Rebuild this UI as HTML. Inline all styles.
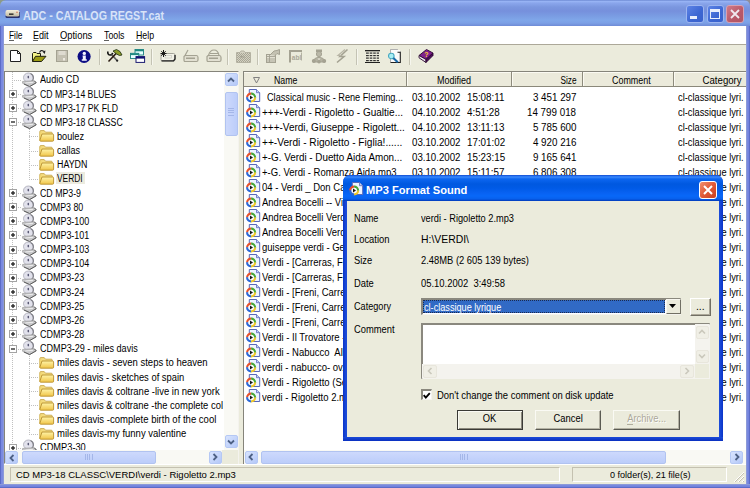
<!DOCTYPE html><html><head><meta charset="utf-8"><style>
*{margin:0;padding:0;box-sizing:border-box}
html,body{width:750px;height:488px;overflow:hidden;background:#fff}
body{position:relative;font-family:"Liberation Sans",sans-serif;font-size:9px;color:#000}
.ab{position:absolute}
.t{position:absolute;white-space:pre;line-height:1}
svg{position:absolute;overflow:visible}
</style></head><body><div class="ab" style="left:0px;top:0px;width:750px;height:488px;background:#7c92dc"></div>
<div class="ab" style="left:0px;top:0px;width:8px;height:8px;background:#8c9a88"></div>
<div class="ab" style="left:742px;top:0px;width:8px;height:8px;background:#8e8e98"></div>
<div class="ab" style="left:0px;top:0px;width:750px;height:27px;border-radius:6px 6px 0 0;background:linear-gradient(#6d8ad3 0px,#97b3f4 1.5px,#8aa6ec 3px,#7b97df 7px,#7690dc 11px,#7a9ce3 16px,#7fa6e9 20px,#7ca0e6 23px,#6f8bd6 26px)"></div>
<div class="ab" style="left:0px;top:26px;width:4px;height:462px;background:linear-gradient(90deg,#5c6cc8 0,#5c6cc8 1px,#7888e0 1px,#7c8ce0 3px,#8c9ad8 3px)"></div>
<div class="ab" style="left:746px;top:26px;width:4px;height:462px;background:linear-gradient(90deg,#8c9ad8 0,#8c9ad8 1px,#7c8ce0 1px,#7080dc 3px,#5c6cc8 3px)"></div>
<div class="ab" style="left:0px;top:484px;width:750px;height:4px;background:linear-gradient(#8c9ad8 0,#8c9ad8 1px,#7c8ce0 1px,#7080dc 3px,#5c6cc8 3px)"></div>
<div class="ab" style="left:4px;top:26px;width:742px;height:458px;background:#ebebdc"></div>
<div class="ab" style="left:4px;top:26px;width:742px;height:18px;background:#fff"></div>
<div class="ab" style="left:4px;top:44px;width:742px;height:1px;background:#aca899"></div>
<svg style="left:5px;top:9px;" width="16" height="10" viewBox="0 0 16 10"><defs><linearGradient id="ti" x1="0" y1="0" x2="0" y2="1"><stop offset="0" stop-color="#f4f0dc"/><stop offset="1" stop-color="#c0b8a0"/></linearGradient></defs><rect x="0.5" y="6" width="14.5" height="3" rx="1.5" fill="#28306a"/><rect x="0.5" y="1" width="14" height="6.5" rx="2" fill="url(#ti)"/><path d="M14.5 3V7" stroke="#404870" stroke-width="0.8"/><rect x="4" y="4.5" width="4.5" height="1.3" fill="#181818"/><circle cx="12" cy="3.2" r="0.7" fill="#d06040"/></svg>
<div class="t" style="left:23px;transform-origin:0 0;top:10px;font-size:12px;font-weight:bold;transform:scaleX(0.8911);color:#d8e3f8">ADC - CATALOG REGST.cat</div>
<div class="ab" style="left:686px;top:5px;width:18px;height:18px;border-radius:3px;border:1px solid #9db5f0;background:linear-gradient(135deg,#5d84e6,#3c66d2 60%,#3a62cc)"></div>
<div class="ab" style="left:707px;top:5px;width:17px;height:18px;border-radius:3px;border:1px solid #9db5f0;background:linear-gradient(135deg,#5d84e6,#3c66d2 60%,#3a62cc)"></div>
<div class="ab" style="left:726px;top:5px;width:18px;height:18px;border-radius:3px;border:1px solid #d8a0b0;background:linear-gradient(135deg,#d07a88,#b85868 60%,#b05565)"></div>
<div class="ab" style="left:690px;top:16px;width:7px;height:3px;background:#e8eefc"></div>
<div class="ab" style="left:710px;top:9px;width:10px;height:10px;border:1.5px solid #e8eefc;border-top-width:3px"></div>
<svg style="left:730px;top:9px;" width="10" height="10" viewBox="0 0 10 10"><path d="M1 1L9 9M9 1L1 9" stroke="#f0e8ee" stroke-width="1.8"/></svg>
<div class="t" style="left:8.5px;transform-origin:0 0;top:31px;font-size:10.4px;transform:scaleX(0.8056);">File</div>
<div class="t" style="left:33px;transform-origin:0 0;top:31px;font-size:10.4px;transform:scaleX(0.8705);">Edit</div>
<div class="t" style="left:59.7px;transform-origin:0 0;top:31px;font-size:10.4px;transform:scaleX(0.9012);">Options</div>
<div class="t" style="left:103.5px;transform-origin:0 0;top:31px;font-size:10.4px;transform:scaleX(0.8443);">Tools</div>
<div class="t" style="left:135.5px;transform-origin:0 0;top:31px;font-size:10.4px;transform:scaleX(0.8462);">Help</div>
<div class="ab" style="left:8.5px;top:40px;width:5px;height:1px;background:#606060"></div>
<div class="ab" style="left:33px;top:40px;width:5px;height:1px;background:#606060"></div>
<div class="ab" style="left:59.7px;top:40px;width:7px;height:1px;background:#606060"></div>
<div class="ab" style="left:103.5px;top:40px;width:5px;height:1px;background:#606060"></div>
<div class="ab" style="left:135.5px;top:40px;width:6px;height:1px;background:#606060"></div>
<div class="ab" style="left:99px;top:49px;width:1px;height:16px;background:#c4c3b4"></div>
<div class="ab" style="left:100px;top:49px;width:1px;height:16px;background:#f6f6ee"></div>
<div class="ab" style="left:151px;top:49px;width:1px;height:16px;background:#c4c3b4"></div>
<div class="ab" style="left:152px;top:49px;width:1px;height:16px;background:#f6f6ee"></div>
<div class="ab" style="left:227px;top:49px;width:1px;height:16px;background:#c4c3b4"></div>
<div class="ab" style="left:228px;top:49px;width:1px;height:16px;background:#f6f6ee"></div>
<div class="ab" style="left:257px;top:49px;width:1px;height:16px;background:#c4c3b4"></div>
<div class="ab" style="left:258px;top:49px;width:1px;height:16px;background:#f6f6ee"></div>
<div class="ab" style="left:356px;top:49px;width:1px;height:16px;background:#c4c3b4"></div>
<div class="ab" style="left:357px;top:49px;width:1px;height:16px;background:#f6f6ee"></div>
<div class="ab" style="left:409px;top:49px;width:1px;height:16px;background:#c4c3b4"></div>
<div class="ab" style="left:410px;top:49px;width:1px;height:16px;background:#f6f6ee"></div>
<svg style="left:10px;top:50px;" width="12" height="13" viewBox="0 0 12 13"><path d="M0.5 0.5H7.5L10.5 3.5V11.5H0.5Z" fill="#fff" stroke="#202020"/><path d="M7.5 0.5V3.5H10.5" fill="none" stroke="#202020"/></svg>
<svg style="left:32px;top:49px;" width="15" height="14" viewBox="0 0 15 14"><path d="M0.5 12.5V4.5L1.5 3.5H4L5 4.5H8.5V7" fill="#f4f488" stroke="#202010" stroke-width="1"/><path d="M0.5 12.5L3.5 7.3H14L9.5 12.5Z" fill="#9c9c14" stroke="#202010" stroke-width="1"/><path d="M7.5 3.5Q9 0.5 11.5 2" fill="none" stroke="#202020" stroke-width="1.1"/><path d="M10.3 2.6L13.5 1.5L12.8 5Z" fill="#202020"/></svg>
<svg style="left:56px;top:50px;" width="13" height="13" viewBox="0 0 13 13"><rect x="0.5" y="0.5" width="11" height="11" fill="#c4c1b2" stroke="#a4a292"/><rect x="2.5" y="1" width="7" height="4" fill="#dedbd0"/><rect x="7" y="8" width="2" height="2.5" fill="#eeeae0"/></svg>
<svg style="left:77px;top:50px;" width="15" height="14" viewBox="0 0 15 14"><ellipse cx="7.1" cy="6.5" rx="6.6" ry="6.4" fill="#0c0c84"/><circle cx="7.3" cy="3.4" r="1.7" fill="#f4f4ff"/><path d="M5.6 5.4H8.8V9.2H9.8V10.8H4.8V9.2H5.8V6.8H5.6Z" fill="#f4f4ff"/></svg>
<svg style="left:107px;top:49px;" width="16" height="14" viewBox="0 0 16 14"><path d="M0.8 2.5Q0.5 6 3.2 6Q5.2 6 5.6 3.8" fill="none" stroke="#101010" stroke-width="1.6"/><path d="M4.5 5.5L10.5 12" stroke="#606060" stroke-width="1.8"/><path d="M9.5 11L10.8 12.3" stroke="#202020" stroke-width="1.8"/><path d="M1.5 12.5L9.5 4" stroke="#2a1a10" stroke-width="1.6"/><path d="M6 2L9.5 0.5L13 2.5L15 6L12.5 6.5L9.5 5Z" fill="#8a9a28" stroke="#1a2a10" stroke-width="0.8"/></svg>
<svg style="left:130px;top:49px;" width="16" height="14" viewBox="0 0 16 14"><rect x="5" y="0.5" width="8.5" height="5.5" fill="#e8ffff" stroke="#1a8080" stroke-width="0.9"/><rect x="5" y="0.5" width="8.5" height="1.8" fill="#208a80"/><rect x="0.5" y="4.3" width="8.3" height="5.2" fill="#e8ffff" stroke="#1a8080" stroke-width="0.9"/><rect x="0.5" y="4.3" width="8.3" height="1.8" fill="#208a80"/><rect x="6" y="7.6" width="8.6" height="5.8" fill="#fff" stroke="#1a1a70" stroke-width="1"/><rect x="6" y="7.6" width="8.6" height="2" fill="#101070"/></svg>
<svg style="left:160px;top:49px;" width="16" height="14" viewBox="0 0 16 14"><path d="M2.5 4.5H13.5Q15 4.5 15 6V10.5Q15 12 13.5 12H2.5Q1 12 1 10.5V6Q1 4.5 2.5 4.5Z" fill="#f2f2e8" stroke="#909088" stroke-width="0.8"/><path d="M1.5 11.8H13.5L15 10V6" fill="none" stroke="#202020" stroke-width="1.3"/><rect x="5" y="6.5" width="6.5" height="2.5" fill="none" stroke="#c8c8c0" stroke-width="0.7"/><path d="M3.5 1V8M0.5 4.5H6.5M1.3 2.2L5.7 6.8M5.7 2.2L1.3 6.8" stroke="#181818" stroke-width="1"/></svg>
<svg style="left:183px;top:49px;" width="16" height="14" viewBox="0 0 16 14"><path d="M2 6.5H13.5Q15 6.5 15 8.5V11Q15 12.5 13.5 12.5H2Q1 12.5 1 11V7.5Z" fill="#e2e0d2" stroke="#a4a292" stroke-width="1.2"/><path d="M2 6.5L5 1" stroke="#a4a292" stroke-width="1.2"/><rect x="3" y="8.5" width="9" height="1.5" fill="#a4a292"/></svg>
<svg style="left:206px;top:49px;" width="16" height="14" viewBox="0 0 16 14"><path d="M2 6.5H13.5Q15 6.5 15 8.5V11Q15 12.5 13.5 12.5H2Q1 12.5 1 11V7.5Z" fill="#e2e0d2" stroke="#a4a292" stroke-width="1.2"/><path d="M2.5 6.5Q4 1 8 1Q12 1 13 6.5" fill="none" stroke="#a4a292" stroke-width="1.2"/><path d="M4 4.5H12" stroke="#a4a292"/><rect x="3" y="8.5" width="9" height="1.5" fill="#a4a292"/></svg>
<svg style="left:236px;top:50px;" width="15" height="13" viewBox="0 0 15 13"><defs><pattern id="chk" width="2" height="2" patternUnits="userSpaceOnUse"><rect width="1" height="1" fill="#a8a696"/><rect x="1" y="1" width="1" height="1" fill="#a8a696"/></pattern></defs><path d="M0.5 2.5H4L5 1H8L9 2.5H14.5V12.5H0.5Z" fill="#d4d2c2" stroke="#b4b2a2"/><rect x="1" y="3" width="13" height="9" fill="url(#chk)"/><path d="M4 7H9M4 7L6 5.5" stroke="#a4a292" stroke-width="1.2"/></svg>
<svg style="left:266px;top:49px;" width="15" height="14" viewBox="0 0 15 14"><rect x="0.5" y="5.5" width="9" height="8" fill="#e2e0d2" stroke="#a4a292"/><path d="M1 7.5H9M1 10H9M1 12H9M3.5 6V13" stroke="#a4a292" stroke-width="0.9"/><path d="M4 6L8 2L11 1.5L13.5 0.5V5.5L11 4.5L9 6.5" fill="#c4c2b2" stroke="#a4a292"/></svg>
<svg style="left:289px;top:50px;" width="14" height="13" viewBox="0 0 14 13"><path d="M1 12.5V1H13" fill="none" stroke="#a4a292" stroke-width="2"/><path d="M12.5 2.5V10.5" stroke="#b4b2a2" stroke-width="1"/><text x="2.8" y="10" font-family="Liberation Sans" font-weight="bold" font-size="6.5" fill="#aaa898">abl</text></svg>
<svg style="left:311px;top:49px;" width="16" height="15" viewBox="0 0 16 15"><rect x="5" y="0.5" width="6" height="2.5" fill="#a4a292"/><circle cx="8" cy="5" r="2.6" fill="#bab8a8" stroke="#a4a292"/><path d="M2 13Q2.5 8.5 8 8.5Q13.5 8.5 14 13Z" fill="#b4b2a2" stroke="#a4a292"/><circle cx="2.8" cy="12" r="2" fill="#a4a292"/><circle cx="13.2" cy="12" r="2" fill="#a4a292"/><circle cx="8" cy="12.8" r="1.8" fill="#a4a292"/><path d="M7 9L8 11L9 9" stroke="#dcdacc" fill="none"/></svg>
<svg style="left:336px;top:49px;" width="13" height="14" viewBox="0 0 13 14"><path d="M11.5 0.5L4 7.5H8L1 13.5" fill="none" stroke="#a4a292" stroke-width="1.6"/><path d="M9 0.5L2 6.5H5.5" fill="none" stroke="#b8b6a6" stroke-width="1.2"/></svg>
<svg style="left:365px;top:50px;" width="15" height="13" viewBox="0 0 15 13"><rect x="0" y="0" width="15" height="1.3" fill="#202020"/><g fill="#303030"><rect x="1" y="2.5" width="13" height="1.2"/><rect x="1" y="5" width="13" height="1.2"/><rect x="1" y="7.5" width="13" height="1.2"/><rect x="1" y="10" width="13" height="1.2"/></g><g fill="#ebebdc"><rect x="3.8" y="2" width="0.9" height="11"/><rect x="7.3" y="2" width="0.9" height="11"/><rect x="10.8" y="2" width="0.9" height="11"/></g><rect x="0" y="12" width="15" height="1" fill="#202020"/></svg>
<svg style="left:387px;top:49px;" width="15" height="15" viewBox="0 0 15 15"><path d="M3.5 13.5V0.5H10L13.5 3" fill="#fafafa" stroke="#b0b0b0" stroke-width="1"/><path d="M3.5 0.5H10L13.5 3" fill="none" stroke="#b0b0b0"/><rect x="4" y="1" width="9" height="12" fill="#fafafa"/><path d="M10.5 3.3H13.3V13.5H3.5" fill="none" stroke="#202020" stroke-width="1.1"/><circle cx="4.3" cy="7" r="2.8" fill="#a8eef4" stroke="#48a8c0" stroke-width="1.1"/><path d="M6.3 9L10.8 13.2" stroke="#1a6aa8" stroke-width="2.2"/></svg>
<svg style="left:418px;top:49px;" width="16" height="15" viewBox="0 0 16 15"><path d="M1 6.5L8.5 0.5L15 4L8 10.5Z" fill="#80208e" stroke="#2a0830" stroke-width="0.9"/><path d="M1 6.5V8.8L8 13.5V10.5Z" fill="#ece4f0" stroke="#2a0830" stroke-width="0.9"/><path d="M8 10.5L15 4V6.5L8 13.5Z" fill="#4a0a58" stroke="#2a0830" stroke-width="0.9"/><text x="6.2" y="8" font-family="Liberation Sans" font-weight="bold" font-size="7" fill="#f8d020">?</text></svg>
<div class="ab" style="left:4px;top:71px;width:235px;height:393px;background:#fff;border-top:1px solid #85847a;border-left:1px solid #85847a;border-right:1px solid #f4f3ee;border-bottom:1px solid #f4f3ee"></div>
<div class="ab" style="left:5px;top:72px;width:219px;height:378px;overflow:hidden">
<div class="ab" style="left:7px;top:0.00px;width:1px;height:392.00px;background:repeating-linear-gradient(#c0c0c0 0 1px,transparent 1px 2px)"></div>
<div class="ab" style="left:9px;top:8.00px;width:8px;height:1px;background:repeating-linear-gradient(90deg,#c0c0c0 0 1px,transparent 1px 2px)"></div>
<div class="ab" style="left:9px;top:22.00px;width:8px;height:1px;background:repeating-linear-gradient(90deg,#c0c0c0 0 1px,transparent 1px 2px)"></div>
<div class="ab" style="left:9px;top:36.00px;width:8px;height:1px;background:repeating-linear-gradient(90deg,#c0c0c0 0 1px,transparent 1px 2px)"></div>
<div class="ab" style="left:9px;top:50.00px;width:8px;height:1px;background:repeating-linear-gradient(90deg,#c0c0c0 0 1px,transparent 1px 2px)"></div>
<div class="ab" style="left:24px;top:64.00px;width:9px;height:1px;background:repeating-linear-gradient(90deg,#c0c0c0 0 1px,transparent 1px 2px)"></div>
<div class="ab" style="left:24px;top:79.00px;width:9px;height:1px;background:repeating-linear-gradient(90deg,#c0c0c0 0 1px,transparent 1px 2px)"></div>
<div class="ab" style="left:24px;top:93.00px;width:9px;height:1px;background:repeating-linear-gradient(90deg,#c0c0c0 0 1px,transparent 1px 2px)"></div>
<div class="ab" style="left:24px;top:107.00px;width:9px;height:1px;background:repeating-linear-gradient(90deg,#c0c0c0 0 1px,transparent 1px 2px)"></div>
<div class="ab" style="left:9px;top:121.00px;width:8px;height:1px;background:repeating-linear-gradient(90deg,#c0c0c0 0 1px,transparent 1px 2px)"></div>
<div class="ab" style="left:9px;top:135.00px;width:8px;height:1px;background:repeating-linear-gradient(90deg,#c0c0c0 0 1px,transparent 1px 2px)"></div>
<div class="ab" style="left:9px;top:149.00px;width:8px;height:1px;background:repeating-linear-gradient(90deg,#c0c0c0 0 1px,transparent 1px 2px)"></div>
<div class="ab" style="left:9px;top:163.00px;width:8px;height:1px;background:repeating-linear-gradient(90deg,#c0c0c0 0 1px,transparent 1px 2px)"></div>
<div class="ab" style="left:9px;top:178.00px;width:8px;height:1px;background:repeating-linear-gradient(90deg,#c0c0c0 0 1px,transparent 1px 2px)"></div>
<div class="ab" style="left:9px;top:192.00px;width:8px;height:1px;background:repeating-linear-gradient(90deg,#c0c0c0 0 1px,transparent 1px 2px)"></div>
<div class="ab" style="left:9px;top:206.00px;width:8px;height:1px;background:repeating-linear-gradient(90deg,#c0c0c0 0 1px,transparent 1px 2px)"></div>
<div class="ab" style="left:9px;top:220.00px;width:8px;height:1px;background:repeating-linear-gradient(90deg,#c0c0c0 0 1px,transparent 1px 2px)"></div>
<div class="ab" style="left:9px;top:234.00px;width:8px;height:1px;background:repeating-linear-gradient(90deg,#c0c0c0 0 1px,transparent 1px 2px)"></div>
<div class="ab" style="left:9px;top:248.00px;width:8px;height:1px;background:repeating-linear-gradient(90deg,#c0c0c0 0 1px,transparent 1px 2px)"></div>
<div class="ab" style="left:9px;top:262.00px;width:8px;height:1px;background:repeating-linear-gradient(90deg,#c0c0c0 0 1px,transparent 1px 2px)"></div>
<div class="ab" style="left:9px;top:277.00px;width:8px;height:1px;background:repeating-linear-gradient(90deg,#c0c0c0 0 1px,transparent 1px 2px)"></div>
<div class="ab" style="left:24px;top:291.00px;width:9px;height:1px;background:repeating-linear-gradient(90deg,#c0c0c0 0 1px,transparent 1px 2px)"></div>
<div class="ab" style="left:24px;top:305.00px;width:9px;height:1px;background:repeating-linear-gradient(90deg,#c0c0c0 0 1px,transparent 1px 2px)"></div>
<div class="ab" style="left:24px;top:319.00px;width:9px;height:1px;background:repeating-linear-gradient(90deg,#c0c0c0 0 1px,transparent 1px 2px)"></div>
<div class="ab" style="left:24px;top:333.00px;width:9px;height:1px;background:repeating-linear-gradient(90deg,#c0c0c0 0 1px,transparent 1px 2px)"></div>
<div class="ab" style="left:24px;top:347.00px;width:9px;height:1px;background:repeating-linear-gradient(90deg,#c0c0c0 0 1px,transparent 1px 2px)"></div>
<div class="ab" style="left:24px;top:362.00px;width:9px;height:1px;background:repeating-linear-gradient(90deg,#c0c0c0 0 1px,transparent 1px 2px)"></div>
<div class="ab" style="left:9px;top:376.00px;width:8px;height:1px;background:repeating-linear-gradient(90deg,#c0c0c0 0 1px,transparent 1px 2px)"></div>
<div class="ab" style="left:24px;top:57.25px;width:1px;height:49.60px;background:repeating-linear-gradient(#c0c0c0 0 1px,transparent 1px 2px)"></div>
<div class="ab" style="left:24px;top:283.65px;width:1px;height:77.90px;background:repeating-linear-gradient(#c0c0c0 0 1px,transparent 1px 2px)"></div>
<svg style="left:17px;top:0.50px" width="16" height="15" viewBox="0 0 16 15"><ellipse cx="6.4" cy="4.6" rx="4.9" ry="4.6" fill="#e2e2ec" stroke="#a0a0ac" stroke-width="0.7"/><path d="M8.5 0.6Q11.6 2 11.4 5.2Q11.2 7.6 9.5 8.6" fill="none" stroke="#7c7c84" stroke-width="1.1"/><ellipse cx="6.3" cy="4.1" rx="0.8" ry="1.3" fill="#555570"/><path d="M0.6 8.4L12.4 7.8L14.2 9.8L7.6 13.6L0.6 10.3Z" fill="#c8c8ca" stroke="#9a9a9a" stroke-width="0.7"/><path d="M12.4 7.8L14.2 9.8L7.6 13.6L2 11" fill="none" stroke="#5a5a5a" stroke-width="1"/><path d="M3.5 10L11 9.3" stroke="#f8f8f8" stroke-width="0.8"/></svg>
<div class="t" style="left:35px;transform-origin:0 0;top:3px;font-size:10px;transform:scaleX(0.9112);">Audio CD</div>
<svg style="left:17px;top:14.65px" width="16" height="15" viewBox="0 0 16 15"><ellipse cx="6.4" cy="4.6" rx="4.9" ry="4.6" fill="#e2e2ec" stroke="#a0a0ac" stroke-width="0.7"/><path d="M8.5 0.6Q11.6 2 11.4 5.2Q11.2 7.6 9.5 8.6" fill="none" stroke="#7c7c84" stroke-width="1.1"/><ellipse cx="6.3" cy="4.1" rx="0.8" ry="1.3" fill="#555570"/><path d="M0.6 8.4L12.4 7.8L14.2 9.8L7.6 13.6L0.6 10.3Z" fill="#c8c8ca" stroke="#9a9a9a" stroke-width="0.7"/><path d="M12.4 7.8L14.2 9.8L7.6 13.6L2 11" fill="none" stroke="#5a5a5a" stroke-width="1"/><path d="M3.5 10L11 9.3" stroke="#f8f8f8" stroke-width="0.8"/></svg>
<div class="t" style="left:35px;transform-origin:0 0;top:18px;font-size:10px;transform:scaleX(0.8655);">CD MP3-14 BLUES</div>
<svg style="left:4px;top:18.00px" width="8" height="8" viewBox="0 0 8 8"><rect x="0.5" y="0.5" width="7" height="7" fill="#fff" stroke="#a4a4a4"/><path d="M2 4H6" stroke="#202020" stroke-width="1.3"/><path d="M4 2V6" stroke="#202020" stroke-width="1.3"/></svg>
<svg style="left:17px;top:28.80px" width="16" height="15" viewBox="0 0 16 15"><ellipse cx="6.4" cy="4.6" rx="4.9" ry="4.6" fill="#e2e2ec" stroke="#a0a0ac" stroke-width="0.7"/><path d="M8.5 0.6Q11.6 2 11.4 5.2Q11.2 7.6 9.5 8.6" fill="none" stroke="#7c7c84" stroke-width="1.1"/><ellipse cx="6.3" cy="4.1" rx="0.8" ry="1.3" fill="#555570"/><path d="M0.6 8.4L12.4 7.8L14.2 9.8L7.6 13.6L0.6 10.3Z" fill="#c8c8ca" stroke="#9a9a9a" stroke-width="0.7"/><path d="M12.4 7.8L14.2 9.8L7.6 13.6L2 11" fill="none" stroke="#5a5a5a" stroke-width="1"/><path d="M3.5 10L11 9.3" stroke="#f8f8f8" stroke-width="0.8"/></svg>
<div class="t" style="left:35px;transform-origin:0 0;top:32px;font-size:10px;transform:scaleX(0.8664);">CD MP3-17 PK FLD</div>
<svg style="left:4px;top:32.00px" width="8" height="8" viewBox="0 0 8 8"><rect x="0.5" y="0.5" width="7" height="7" fill="#fff" stroke="#a4a4a4"/><path d="M2 4H6" stroke="#202020" stroke-width="1.3"/><path d="M4 2V6" stroke="#202020" stroke-width="1.3"/></svg>
<svg style="left:17px;top:42.95px" width="16" height="15" viewBox="0 0 16 15"><ellipse cx="6.4" cy="4.6" rx="4.9" ry="4.6" fill="#e2e2ec" stroke="#a0a0ac" stroke-width="0.7"/><path d="M8.5 0.6Q11.6 2 11.4 5.2Q11.2 7.6 9.5 8.6" fill="none" stroke="#7c7c84" stroke-width="1.1"/><ellipse cx="6.3" cy="4.1" rx="0.8" ry="1.3" fill="#555570"/><path d="M0.6 8.4L12.4 7.8L14.2 9.8L7.6 13.6L0.6 10.3Z" fill="#c8c8ca" stroke="#9a9a9a" stroke-width="0.7"/><path d="M12.4 7.8L14.2 9.8L7.6 13.6L2 11" fill="none" stroke="#5a5a5a" stroke-width="1"/><path d="M3.5 10L11 9.3" stroke="#f8f8f8" stroke-width="0.8"/></svg>
<div class="t" style="left:35px;transform-origin:0 0;top:46px;font-size:10px;transform:scaleX(0.8702);">CD MP3-18 CLASSC</div>
<svg style="left:4px;top:46.00px" width="8" height="8" viewBox="0 0 8 8"><rect x="0.5" y="0.5" width="7" height="7" fill="#fff" stroke="#a4a4a4"/><path d="M2 4H6" stroke="#202020" stroke-width="1.3"/></svg>
<svg style="left:33.5px;top:58.40px" width="16" height="12" viewBox="0 0 16 12"><defs><linearGradient id="fg" x1="0" y1="0" x2="0" y2="1"><stop offset="0" stop-color="#fff4a8"/><stop offset="1" stop-color="#f0c448"/></linearGradient></defs><path d="M0.8 10.5V1.6Q0.8 0.6 1.8 0.6H5.2L6.5 2.2H12.2Q13.3 2.2 13.3 3.3V4" fill="#f4dc80" stroke="#c8a850" stroke-width="0.9"/><path d="M0.8 10.5V2.5H3L3 10.5Z" fill="#f2d670"/><path d="M3 4H13.6Q14.6 4 14.6 5V10.2Q14.6 11.2 13.6 11.2H1.8Q0.8 11.2 0.8 10.4L3 4Z" fill="url(#fg)" stroke="#b89030" stroke-width="0.9"/></svg>
<div class="t" style="left:52px;transform-origin:0 0;top:60px;font-size:10px;transform:scaleX(0.9162);">boulez</div>
<svg style="left:33.5px;top:72.55px" width="16" height="12" viewBox="0 0 16 12"><defs><linearGradient id="fg" x1="0" y1="0" x2="0" y2="1"><stop offset="0" stop-color="#fff4a8"/><stop offset="1" stop-color="#f0c448"/></linearGradient></defs><path d="M0.8 10.5V1.6Q0.8 0.6 1.8 0.6H5.2L6.5 2.2H12.2Q13.3 2.2 13.3 3.3V4" fill="#f4dc80" stroke="#c8a850" stroke-width="0.9"/><path d="M0.8 10.5V2.5H3L3 10.5Z" fill="#f2d670"/><path d="M3 4H13.6Q14.6 4 14.6 5V10.2Q14.6 11.2 13.6 11.2H1.8Q0.8 11.2 0.8 10.4L3 4Z" fill="url(#fg)" stroke="#b89030" stroke-width="0.9"/></svg>
<div class="t" style="left:52px;transform-origin:0 0;top:74px;font-size:10px;transform:scaleX(0.8996);">callas</div>
<svg style="left:33.5px;top:86.70px" width="16" height="12" viewBox="0 0 16 12"><defs><linearGradient id="fg" x1="0" y1="0" x2="0" y2="1"><stop offset="0" stop-color="#fff4a8"/><stop offset="1" stop-color="#f0c448"/></linearGradient></defs><path d="M0.8 10.5V1.6Q0.8 0.6 1.8 0.6H5.2L6.5 2.2H12.2Q13.3 2.2 13.3 3.3V4" fill="#f4dc80" stroke="#c8a850" stroke-width="0.9"/><path d="M0.8 10.5V2.5H3L3 10.5Z" fill="#f2d670"/><path d="M3 4H13.6Q14.6 4 14.6 5V10.2Q14.6 11.2 13.6 11.2H1.8Q0.8 11.2 0.8 10.4L3 4Z" fill="url(#fg)" stroke="#b89030" stroke-width="0.9"/></svg>
<div class="t" style="left:52px;transform-origin:0 0;top:88px;font-size:10px;transform:scaleX(0.8843);">HAYDN</div>
<div class="ab" style="left:51px;top:99.55px;width:29px;height:12.5px;background:#ecebdf"></div>
<svg style="left:33.5px;top:100.85px" width="16" height="12" viewBox="0 0 16 12"><defs><linearGradient id="fg" x1="0" y1="0" x2="0" y2="1"><stop offset="0" stop-color="#fff4a8"/><stop offset="1" stop-color="#f0c448"/></linearGradient></defs><path d="M0.8 10.5V1.6Q0.8 0.6 1.8 0.6H5.2L6.5 2.2H12.2Q13.3 2.2 13.3 3.3V4" fill="#f4dc80" stroke="#c8a850" stroke-width="0.9"/><path d="M0.8 10.5V2.5H3L3 10.5Z" fill="#f2d670"/><path d="M3 4H13.6Q14.6 4 14.6 5V10.2Q14.6 11.2 13.6 11.2H1.8Q0.8 11.2 0.8 10.4L3 4Z" fill="url(#fg)" stroke="#b89030" stroke-width="0.9"/></svg>
<div class="t" style="left:52px;transform-origin:0 0;top:102px;font-size:10px;transform:scaleX(0.8409);">VERDI</div>
<svg style="left:17px;top:113.70px" width="16" height="15" viewBox="0 0 16 15"><ellipse cx="6.4" cy="4.6" rx="4.9" ry="4.6" fill="#e2e2ec" stroke="#a0a0ac" stroke-width="0.7"/><path d="M8.5 0.6Q11.6 2 11.4 5.2Q11.2 7.6 9.5 8.6" fill="none" stroke="#7c7c84" stroke-width="1.1"/><ellipse cx="6.3" cy="4.1" rx="0.8" ry="1.3" fill="#555570"/><path d="M0.6 8.4L12.4 7.8L14.2 9.8L7.6 13.6L0.6 10.3Z" fill="#c8c8ca" stroke="#9a9a9a" stroke-width="0.7"/><path d="M12.4 7.8L14.2 9.8L7.6 13.6L2 11" fill="none" stroke="#5a5a5a" stroke-width="1"/><path d="M3.5 10L11 9.3" stroke="#f8f8f8" stroke-width="0.8"/></svg>
<div class="t" style="left:35px;transform-origin:0 0;top:117px;font-size:10px;transform:scaleX(0.8784);">CD MP3-9</div>
<svg style="left:4px;top:117.00px" width="8" height="8" viewBox="0 0 8 8"><rect x="0.5" y="0.5" width="7" height="7" fill="#fff" stroke="#a4a4a4"/><path d="M2 4H6" stroke="#202020" stroke-width="1.3"/><path d="M4 2V6" stroke="#202020" stroke-width="1.3"/></svg>
<svg style="left:17px;top:127.85px" width="16" height="15" viewBox="0 0 16 15"><ellipse cx="6.4" cy="4.6" rx="4.9" ry="4.6" fill="#e2e2ec" stroke="#a0a0ac" stroke-width="0.7"/><path d="M8.5 0.6Q11.6 2 11.4 5.2Q11.2 7.6 9.5 8.6" fill="none" stroke="#7c7c84" stroke-width="1.1"/><ellipse cx="6.3" cy="4.1" rx="0.8" ry="1.3" fill="#555570"/><path d="M0.6 8.4L12.4 7.8L14.2 9.8L7.6 13.6L0.6 10.3Z" fill="#c8c8ca" stroke="#9a9a9a" stroke-width="0.7"/><path d="M12.4 7.8L14.2 9.8L7.6 13.6L2 11" fill="none" stroke="#5a5a5a" stroke-width="1"/><path d="M3.5 10L11 9.3" stroke="#f8f8f8" stroke-width="0.8"/></svg>
<div class="t" style="left:35px;transform-origin:0 0;top:131px;font-size:10px;transform:scaleX(0.8853);">CDMP3 80</div>
<svg style="left:4px;top:131.00px" width="8" height="8" viewBox="0 0 8 8"><rect x="0.5" y="0.5" width="7" height="7" fill="#fff" stroke="#a4a4a4"/><path d="M2 4H6" stroke="#202020" stroke-width="1.3"/><path d="M4 2V6" stroke="#202020" stroke-width="1.3"/></svg>
<svg style="left:17px;top:142.00px" width="16" height="15" viewBox="0 0 16 15"><ellipse cx="6.4" cy="4.6" rx="4.9" ry="4.6" fill="#e2e2ec" stroke="#a0a0ac" stroke-width="0.7"/><path d="M8.5 0.6Q11.6 2 11.4 5.2Q11.2 7.6 9.5 8.6" fill="none" stroke="#7c7c84" stroke-width="1.1"/><ellipse cx="6.3" cy="4.1" rx="0.8" ry="1.3" fill="#555570"/><path d="M0.6 8.4L12.4 7.8L14.2 9.8L7.6 13.6L0.6 10.3Z" fill="#c8c8ca" stroke="#9a9a9a" stroke-width="0.7"/><path d="M12.4 7.8L14.2 9.8L7.6 13.6L2 11" fill="none" stroke="#5a5a5a" stroke-width="1"/><path d="M3.5 10L11 9.3" stroke="#f8f8f8" stroke-width="0.8"/></svg>
<div class="t" style="left:35px;transform-origin:0 0;top:145px;font-size:10px;transform:scaleX(0.8960);">CDMP3-100</div>
<svg style="left:4px;top:145.00px" width="8" height="8" viewBox="0 0 8 8"><rect x="0.5" y="0.5" width="7" height="7" fill="#fff" stroke="#a4a4a4"/><path d="M2 4H6" stroke="#202020" stroke-width="1.3"/><path d="M4 2V6" stroke="#202020" stroke-width="1.3"/></svg>
<svg style="left:17px;top:156.15px" width="16" height="15" viewBox="0 0 16 15"><ellipse cx="6.4" cy="4.6" rx="4.9" ry="4.6" fill="#e2e2ec" stroke="#a0a0ac" stroke-width="0.7"/><path d="M8.5 0.6Q11.6 2 11.4 5.2Q11.2 7.6 9.5 8.6" fill="none" stroke="#7c7c84" stroke-width="1.1"/><ellipse cx="6.3" cy="4.1" rx="0.8" ry="1.3" fill="#555570"/><path d="M0.6 8.4L12.4 7.8L14.2 9.8L7.6 13.6L0.6 10.3Z" fill="#c8c8ca" stroke="#9a9a9a" stroke-width="0.7"/><path d="M12.4 7.8L14.2 9.8L7.6 13.6L2 11" fill="none" stroke="#5a5a5a" stroke-width="1"/><path d="M3.5 10L11 9.3" stroke="#f8f8f8" stroke-width="0.8"/></svg>
<div class="t" style="left:35px;transform-origin:0 0;top:159px;font-size:10px;transform:scaleX(0.8960);">CDMP3-101</div>
<svg style="left:4px;top:159.00px" width="8" height="8" viewBox="0 0 8 8"><rect x="0.5" y="0.5" width="7" height="7" fill="#fff" stroke="#a4a4a4"/><path d="M2 4H6" stroke="#202020" stroke-width="1.3"/><path d="M4 2V6" stroke="#202020" stroke-width="1.3"/></svg>
<svg style="left:17px;top:170.30px" width="16" height="15" viewBox="0 0 16 15"><ellipse cx="6.4" cy="4.6" rx="4.9" ry="4.6" fill="#e2e2ec" stroke="#a0a0ac" stroke-width="0.7"/><path d="M8.5 0.6Q11.6 2 11.4 5.2Q11.2 7.6 9.5 8.6" fill="none" stroke="#7c7c84" stroke-width="1.1"/><ellipse cx="6.3" cy="4.1" rx="0.8" ry="1.3" fill="#555570"/><path d="M0.6 8.4L12.4 7.8L14.2 9.8L7.6 13.6L0.6 10.3Z" fill="#c8c8ca" stroke="#9a9a9a" stroke-width="0.7"/><path d="M12.4 7.8L14.2 9.8L7.6 13.6L2 11" fill="none" stroke="#5a5a5a" stroke-width="1"/><path d="M3.5 10L11 9.3" stroke="#f8f8f8" stroke-width="0.8"/></svg>
<div class="t" style="left:35px;transform-origin:0 0;top:173px;font-size:10px;transform:scaleX(0.8960);">CDMP3-103</div>
<svg style="left:4px;top:174.00px" width="8" height="8" viewBox="0 0 8 8"><rect x="0.5" y="0.5" width="7" height="7" fill="#fff" stroke="#a4a4a4"/><path d="M2 4H6" stroke="#202020" stroke-width="1.3"/><path d="M4 2V6" stroke="#202020" stroke-width="1.3"/></svg>
<svg style="left:17px;top:184.45px" width="16" height="15" viewBox="0 0 16 15"><ellipse cx="6.4" cy="4.6" rx="4.9" ry="4.6" fill="#e2e2ec" stroke="#a0a0ac" stroke-width="0.7"/><path d="M8.5 0.6Q11.6 2 11.4 5.2Q11.2 7.6 9.5 8.6" fill="none" stroke="#7c7c84" stroke-width="1.1"/><ellipse cx="6.3" cy="4.1" rx="0.8" ry="1.3" fill="#555570"/><path d="M0.6 8.4L12.4 7.8L14.2 9.8L7.6 13.6L0.6 10.3Z" fill="#c8c8ca" stroke="#9a9a9a" stroke-width="0.7"/><path d="M12.4 7.8L14.2 9.8L7.6 13.6L2 11" fill="none" stroke="#5a5a5a" stroke-width="1"/><path d="M3.5 10L11 9.3" stroke="#f8f8f8" stroke-width="0.8"/></svg>
<div class="t" style="left:35px;transform-origin:0 0;top:187px;font-size:10px;transform:scaleX(0.8960);">CDMP3-104</div>
<svg style="left:4px;top:188.00px" width="8" height="8" viewBox="0 0 8 8"><rect x="0.5" y="0.5" width="7" height="7" fill="#fff" stroke="#a4a4a4"/><path d="M2 4H6" stroke="#202020" stroke-width="1.3"/><path d="M4 2V6" stroke="#202020" stroke-width="1.3"/></svg>
<svg style="left:17px;top:198.60px" width="16" height="15" viewBox="0 0 16 15"><ellipse cx="6.4" cy="4.6" rx="4.9" ry="4.6" fill="#e2e2ec" stroke="#a0a0ac" stroke-width="0.7"/><path d="M8.5 0.6Q11.6 2 11.4 5.2Q11.2 7.6 9.5 8.6" fill="none" stroke="#7c7c84" stroke-width="1.1"/><ellipse cx="6.3" cy="4.1" rx="0.8" ry="1.3" fill="#555570"/><path d="M0.6 8.4L12.4 7.8L14.2 9.8L7.6 13.6L0.6 10.3Z" fill="#c8c8ca" stroke="#9a9a9a" stroke-width="0.7"/><path d="M12.4 7.8L14.2 9.8L7.6 13.6L2 11" fill="none" stroke="#5a5a5a" stroke-width="1"/><path d="M3.5 10L11 9.3" stroke="#f8f8f8" stroke-width="0.8"/></svg>
<div class="t" style="left:35px;transform-origin:0 0;top:201px;font-size:10px;transform:scaleX(0.8957);">CDMP3-23</div>
<svg style="left:4px;top:202.00px" width="8" height="8" viewBox="0 0 8 8"><rect x="0.5" y="0.5" width="7" height="7" fill="#fff" stroke="#a4a4a4"/><path d="M2 4H6" stroke="#202020" stroke-width="1.3"/><path d="M4 2V6" stroke="#202020" stroke-width="1.3"/></svg>
<svg style="left:17px;top:212.75px" width="16" height="15" viewBox="0 0 16 15"><ellipse cx="6.4" cy="4.6" rx="4.9" ry="4.6" fill="#e2e2ec" stroke="#a0a0ac" stroke-width="0.7"/><path d="M8.5 0.6Q11.6 2 11.4 5.2Q11.2 7.6 9.5 8.6" fill="none" stroke="#7c7c84" stroke-width="1.1"/><ellipse cx="6.3" cy="4.1" rx="0.8" ry="1.3" fill="#555570"/><path d="M0.6 8.4L12.4 7.8L14.2 9.8L7.6 13.6L0.6 10.3Z" fill="#c8c8ca" stroke="#9a9a9a" stroke-width="0.7"/><path d="M12.4 7.8L14.2 9.8L7.6 13.6L2 11" fill="none" stroke="#5a5a5a" stroke-width="1"/><path d="M3.5 10L11 9.3" stroke="#f8f8f8" stroke-width="0.8"/></svg>
<div class="t" style="left:35px;transform-origin:0 0;top:216px;font-size:10px;transform:scaleX(0.8957);">CDMP3-24</div>
<svg style="left:4px;top:216.00px" width="8" height="8" viewBox="0 0 8 8"><rect x="0.5" y="0.5" width="7" height="7" fill="#fff" stroke="#a4a4a4"/><path d="M2 4H6" stroke="#202020" stroke-width="1.3"/><path d="M4 2V6" stroke="#202020" stroke-width="1.3"/></svg>
<svg style="left:17px;top:226.90px" width="16" height="15" viewBox="0 0 16 15"><ellipse cx="6.4" cy="4.6" rx="4.9" ry="4.6" fill="#e2e2ec" stroke="#a0a0ac" stroke-width="0.7"/><path d="M8.5 0.6Q11.6 2 11.4 5.2Q11.2 7.6 9.5 8.6" fill="none" stroke="#7c7c84" stroke-width="1.1"/><ellipse cx="6.3" cy="4.1" rx="0.8" ry="1.3" fill="#555570"/><path d="M0.6 8.4L12.4 7.8L14.2 9.8L7.6 13.6L0.6 10.3Z" fill="#c8c8ca" stroke="#9a9a9a" stroke-width="0.7"/><path d="M12.4 7.8L14.2 9.8L7.6 13.6L2 11" fill="none" stroke="#5a5a5a" stroke-width="1"/><path d="M3.5 10L11 9.3" stroke="#f8f8f8" stroke-width="0.8"/></svg>
<div class="t" style="left:35px;transform-origin:0 0;top:230px;font-size:10px;transform:scaleX(0.8957);">CDMP3-25</div>
<svg style="left:4px;top:230.00px" width="8" height="8" viewBox="0 0 8 8"><rect x="0.5" y="0.5" width="7" height="7" fill="#fff" stroke="#a4a4a4"/><path d="M2 4H6" stroke="#202020" stroke-width="1.3"/><path d="M4 2V6" stroke="#202020" stroke-width="1.3"/></svg>
<svg style="left:17px;top:241.05px" width="16" height="15" viewBox="0 0 16 15"><ellipse cx="6.4" cy="4.6" rx="4.9" ry="4.6" fill="#e2e2ec" stroke="#a0a0ac" stroke-width="0.7"/><path d="M8.5 0.6Q11.6 2 11.4 5.2Q11.2 7.6 9.5 8.6" fill="none" stroke="#7c7c84" stroke-width="1.1"/><ellipse cx="6.3" cy="4.1" rx="0.8" ry="1.3" fill="#555570"/><path d="M0.6 8.4L12.4 7.8L14.2 9.8L7.6 13.6L0.6 10.3Z" fill="#c8c8ca" stroke="#9a9a9a" stroke-width="0.7"/><path d="M12.4 7.8L14.2 9.8L7.6 13.6L2 11" fill="none" stroke="#5a5a5a" stroke-width="1"/><path d="M3.5 10L11 9.3" stroke="#f8f8f8" stroke-width="0.8"/></svg>
<div class="t" style="left:35px;transform-origin:0 0;top:244px;font-size:10px;transform:scaleX(0.8957);">CDMP3-26</div>
<svg style="left:4px;top:244.00px" width="8" height="8" viewBox="0 0 8 8"><rect x="0.5" y="0.5" width="7" height="7" fill="#fff" stroke="#a4a4a4"/><path d="M2 4H6" stroke="#202020" stroke-width="1.3"/><path d="M4 2V6" stroke="#202020" stroke-width="1.3"/></svg>
<svg style="left:17px;top:255.20px" width="16" height="15" viewBox="0 0 16 15"><ellipse cx="6.4" cy="4.6" rx="4.9" ry="4.6" fill="#e2e2ec" stroke="#a0a0ac" stroke-width="0.7"/><path d="M8.5 0.6Q11.6 2 11.4 5.2Q11.2 7.6 9.5 8.6" fill="none" stroke="#7c7c84" stroke-width="1.1"/><ellipse cx="6.3" cy="4.1" rx="0.8" ry="1.3" fill="#555570"/><path d="M0.6 8.4L12.4 7.8L14.2 9.8L7.6 13.6L0.6 10.3Z" fill="#c8c8ca" stroke="#9a9a9a" stroke-width="0.7"/><path d="M12.4 7.8L14.2 9.8L7.6 13.6L2 11" fill="none" stroke="#5a5a5a" stroke-width="1"/><path d="M3.5 10L11 9.3" stroke="#f8f8f8" stroke-width="0.8"/></svg>
<div class="t" style="left:35px;transform-origin:0 0;top:258px;font-size:10px;transform:scaleX(0.8957);">CDMP3-28</div>
<svg style="left:4px;top:258.00px" width="8" height="8" viewBox="0 0 8 8"><rect x="0.5" y="0.5" width="7" height="7" fill="#fff" stroke="#a4a4a4"/><path d="M2 4H6" stroke="#202020" stroke-width="1.3"/><path d="M4 2V6" stroke="#202020" stroke-width="1.3"/></svg>
<svg style="left:17px;top:269.35px" width="16" height="15" viewBox="0 0 16 15"><ellipse cx="6.4" cy="4.6" rx="4.9" ry="4.6" fill="#e2e2ec" stroke="#a0a0ac" stroke-width="0.7"/><path d="M8.5 0.6Q11.6 2 11.4 5.2Q11.2 7.6 9.5 8.6" fill="none" stroke="#7c7c84" stroke-width="1.1"/><ellipse cx="6.3" cy="4.1" rx="0.8" ry="1.3" fill="#555570"/><path d="M0.6 8.4L12.4 7.8L14.2 9.8L7.6 13.6L0.6 10.3Z" fill="#c8c8ca" stroke="#9a9a9a" stroke-width="0.7"/><path d="M12.4 7.8L14.2 9.8L7.6 13.6L2 11" fill="none" stroke="#5a5a5a" stroke-width="1"/><path d="M3.5 10L11 9.3" stroke="#f8f8f8" stroke-width="0.8"/></svg>
<div class="t" style="left:35px;transform-origin:0 0;top:272px;font-size:10px;transform:scaleX(0.9063);">CDMP3-29 - miles davis</div>
<svg style="left:4px;top:273.00px" width="8" height="8" viewBox="0 0 8 8"><rect x="0.5" y="0.5" width="7" height="7" fill="#fff" stroke="#a4a4a4"/><path d="M2 4H6" stroke="#202020" stroke-width="1.3"/></svg>
<svg style="left:33.5px;top:284.80px" width="16" height="12" viewBox="0 0 16 12"><defs><linearGradient id="fg" x1="0" y1="0" x2="0" y2="1"><stop offset="0" stop-color="#fff4a8"/><stop offset="1" stop-color="#f0c448"/></linearGradient></defs><path d="M0.8 10.5V1.6Q0.8 0.6 1.8 0.6H5.2L6.5 2.2H12.2Q13.3 2.2 13.3 3.3V4" fill="#f4dc80" stroke="#c8a850" stroke-width="0.9"/><path d="M0.8 10.5V2.5H3L3 10.5Z" fill="#f2d670"/><path d="M3 4H13.6Q14.6 4 14.6 5V10.2Q14.6 11.2 13.6 11.2H1.8Q0.8 11.2 0.8 10.4L3 4Z" fill="url(#fg)" stroke="#b89030" stroke-width="0.9"/></svg>
<div class="t" style="left:52px;transform-origin:0 0;top:286px;font-size:10px;transform:scaleX(0.9507);">miles davis - seven steps to heaven</div>
<svg style="left:33.5px;top:298.95px" width="16" height="12" viewBox="0 0 16 12"><defs><linearGradient id="fg" x1="0" y1="0" x2="0" y2="1"><stop offset="0" stop-color="#fff4a8"/><stop offset="1" stop-color="#f0c448"/></linearGradient></defs><path d="M0.8 10.5V1.6Q0.8 0.6 1.8 0.6H5.2L6.5 2.2H12.2Q13.3 2.2 13.3 3.3V4" fill="#f4dc80" stroke="#c8a850" stroke-width="0.9"/><path d="M0.8 10.5V2.5H3L3 10.5Z" fill="#f2d670"/><path d="M3 4H13.6Q14.6 4 14.6 5V10.2Q14.6 11.2 13.6 11.2H1.8Q0.8 11.2 0.8 10.4L3 4Z" fill="url(#fg)" stroke="#b89030" stroke-width="0.9"/></svg>
<div class="t" style="left:52px;transform-origin:0 0;top:301px;font-size:10px;transform:scaleX(0.9387);">miles davis - sketches of spain</div>
<svg style="left:33.5px;top:313.10px" width="16" height="12" viewBox="0 0 16 12"><defs><linearGradient id="fg" x1="0" y1="0" x2="0" y2="1"><stop offset="0" stop-color="#fff4a8"/><stop offset="1" stop-color="#f0c448"/></linearGradient></defs><path d="M0.8 10.5V1.6Q0.8 0.6 1.8 0.6H5.2L6.5 2.2H12.2Q13.3 2.2 13.3 3.3V4" fill="#f4dc80" stroke="#c8a850" stroke-width="0.9"/><path d="M0.8 10.5V2.5H3L3 10.5Z" fill="#f2d670"/><path d="M3 4H13.6Q14.6 4 14.6 5V10.2Q14.6 11.2 13.6 11.2H1.8Q0.8 11.2 0.8 10.4L3 4Z" fill="url(#fg)" stroke="#b89030" stroke-width="0.9"/></svg>
<div class="t" style="left:52px;transform-origin:0 0;top:315px;font-size:10px;transform:scaleX(0.9474);">miles davis &amp; coltrane -live in new york</div>
<svg style="left:33.5px;top:327.25px" width="16" height="12" viewBox="0 0 16 12"><defs><linearGradient id="fg" x1="0" y1="0" x2="0" y2="1"><stop offset="0" stop-color="#fff4a8"/><stop offset="1" stop-color="#f0c448"/></linearGradient></defs><path d="M0.8 10.5V1.6Q0.8 0.6 1.8 0.6H5.2L6.5 2.2H12.2Q13.3 2.2 13.3 3.3V4" fill="#f4dc80" stroke="#c8a850" stroke-width="0.9"/><path d="M0.8 10.5V2.5H3L3 10.5Z" fill="#f2d670"/><path d="M3 4H13.6Q14.6 4 14.6 5V10.2Q14.6 11.2 13.6 11.2H1.8Q0.8 11.2 0.8 10.4L3 4Z" fill="url(#fg)" stroke="#b89030" stroke-width="0.9"/></svg>
<div class="t" style="left:52px;transform-origin:0 0;top:329px;font-size:10px;transform:scaleX(0.9422);">miles davis &amp; coltrane -the complete col</div>
<svg style="left:33.5px;top:341.40px" width="16" height="12" viewBox="0 0 16 12"><defs><linearGradient id="fg" x1="0" y1="0" x2="0" y2="1"><stop offset="0" stop-color="#fff4a8"/><stop offset="1" stop-color="#f0c448"/></linearGradient></defs><path d="M0.8 10.5V1.6Q0.8 0.6 1.8 0.6H5.2L6.5 2.2H12.2Q13.3 2.2 13.3 3.3V4" fill="#f4dc80" stroke="#c8a850" stroke-width="0.9"/><path d="M0.8 10.5V2.5H3L3 10.5Z" fill="#f2d670"/><path d="M3 4H13.6Q14.6 4 14.6 5V10.2Q14.6 11.2 13.6 11.2H1.8Q0.8 11.2 0.8 10.4L3 4Z" fill="url(#fg)" stroke="#b89030" stroke-width="0.9"/></svg>
<div class="t" style="left:52px;transform-origin:0 0;top:343px;font-size:10px;transform:scaleX(0.9522);">miles davis -complete birth of the cool</div>
<svg style="left:33.5px;top:355.55px" width="16" height="12" viewBox="0 0 16 12"><defs><linearGradient id="fg" x1="0" y1="0" x2="0" y2="1"><stop offset="0" stop-color="#fff4a8"/><stop offset="1" stop-color="#f0c448"/></linearGradient></defs><path d="M0.8 10.5V1.6Q0.8 0.6 1.8 0.6H5.2L6.5 2.2H12.2Q13.3 2.2 13.3 3.3V4" fill="#f4dc80" stroke="#c8a850" stroke-width="0.9"/><path d="M0.8 10.5V2.5H3L3 10.5Z" fill="#f2d670"/><path d="M3 4H13.6Q14.6 4 14.6 5V10.2Q14.6 11.2 13.6 11.2H1.8Q0.8 11.2 0.8 10.4L3 4Z" fill="url(#fg)" stroke="#b89030" stroke-width="0.9"/></svg>
<div class="t" style="left:52px;transform-origin:0 0;top:357px;font-size:10px;transform:scaleX(0.9495);">miles davis-my funny valentine</div>
<svg style="left:17px;top:368.40px" width="16" height="15" viewBox="0 0 16 15"><ellipse cx="6.4" cy="4.6" rx="4.9" ry="4.6" fill="#e2e2ec" stroke="#a0a0ac" stroke-width="0.7"/><path d="M8.5 0.6Q11.6 2 11.4 5.2Q11.2 7.6 9.5 8.6" fill="none" stroke="#7c7c84" stroke-width="1.1"/><ellipse cx="6.3" cy="4.1" rx="0.8" ry="1.3" fill="#555570"/><path d="M0.6 8.4L12.4 7.8L14.2 9.8L7.6 13.6L0.6 10.3Z" fill="#c8c8ca" stroke="#9a9a9a" stroke-width="0.7"/><path d="M12.4 7.8L14.2 9.8L7.6 13.6L2 11" fill="none" stroke="#5a5a5a" stroke-width="1"/><path d="M3.5 10L11 9.3" stroke="#f8f8f8" stroke-width="0.8"/></svg>
<div class="t" style="left:35px;transform-origin:0 0;top:371px;font-size:10px;transform:scaleX(0.9250);">CDMP3-30</div>
<svg style="left:4px;top:372.00px" width="8" height="8" viewBox="0 0 8 8"><rect x="0.5" y="0.5" width="7" height="7" fill="#fff" stroke="#a4a4a4"/><path d="M2 4H6" stroke="#202020" stroke-width="1.3"/><path d="M4 2V6" stroke="#202020" stroke-width="1.3"/></svg>
</div>
<div class="ab" style="left:224px;top:72px;width:14px;height:378px;background:#f9f9f4"></div>
<div class="ab" style="left:224.5px;top:73px;width:13px;height:13px;border-radius:2px;border:1px solid #b5c8f4;background:linear-gradient(135deg,#d8e4fe,#b4c8f8)"></div>
<svg style="left:231.0px;top:79.5px" width="1" height="1" viewBox="0 0 1 1"><path d="M-3 1.5L0 -1.5L3 1.5" fill="none" stroke="#4d6185" stroke-width="1.8"/></svg>
<div class="ab" style="left:224.5px;top:435px;width:13px;height:13px;border-radius:2px;border:1px solid #b5c8f4;background:linear-gradient(135deg,#d8e4fe,#b4c8f8)"></div>
<svg style="left:231.0px;top:441.5px" width="1" height="1" viewBox="0 0 1 1"><path d="M-3 -1.5L0 1.5L3 -1.5" fill="none" stroke="#4d6185" stroke-width="1.8"/></svg>
<div class="ab" style="left:224.5px;top:91.5px;width:13px;height:44.5px;border-radius:2px;border:1px solid #b1c3f0;background:linear-gradient(90deg,#cdd9fc,#bccdfa)"></div>
<div class="ab" style="left:228px;top:108.0px;width:6px;height:1px;background:#a4b6e8"></div>
<div class="ab" style="left:228px;top:110.2px;width:6px;height:1px;background:#a4b6e8"></div>
<div class="ab" style="left:228px;top:112.4px;width:6px;height:1px;background:#a4b6e8"></div>
<div class="ab" style="left:228px;top:114.6px;width:6px;height:1px;background:#a4b6e8"></div>
<div class="ab" style="left:5px;top:450px;width:219px;height:14px;background:#f9f9f4"></div>
<div class="ab" style="left:5px;top:451px;width:13px;height:13px;border-radius:2px;border:1px solid #b5c8f4;background:linear-gradient(135deg,#d8e4fe,#b4c8f8)"></div>
<svg style="left:11.5px;top:457.5px" width="1" height="1" viewBox="0 0 1 1"><path d="M1.5 -3L-1.5 0L1.5 3" fill="none" stroke="#4d6185" stroke-width="1.8"/></svg>
<div class="ab" style="left:208.5px;top:450.5px;width:13px;height:13px;border-radius:2px;border:1px solid #b5c8f4;background:linear-gradient(135deg,#d8e4fe,#b4c8f8)"></div>
<svg style="left:215.0px;top:457.0px" width="1" height="1" viewBox="0 0 1 1"><path d="M-1.5 -3L1.5 0L-1.5 3" fill="none" stroke="#4d6185" stroke-width="1.8"/></svg>
<div class="ab" style="left:21.5px;top:450.5px;width:134.5px;height:13px;border-radius:2px;border:1px solid #b1c3f0;background:linear-gradient(#cdd9fc,#bccdfa)"></div>
<div class="ab" style="left:85.0px;top:454px;width:1px;height:6px;background:#a4b6e8"></div>
<div class="ab" style="left:87.2px;top:454px;width:1px;height:6px;background:#a4b6e8"></div>
<div class="ab" style="left:89.4px;top:454px;width:1px;height:6px;background:#a4b6e8"></div>
<div class="ab" style="left:91.6px;top:454px;width:1px;height:6px;background:#a4b6e8"></div>
<div class="ab" style="left:222px;top:450px;width:16px;height:14px;background:#ebebdc"></div>
<div class="ab" style="left:243px;top:71px;width:503px;height:393px;background:#fff;border-left:1px solid #85847a;border-top:1px solid #85847a"></div>
<div class="ab" style="left:244px;top:72px;width:502px;height:15px;background:#ebeadb;border-bottom:1px solid #8a887a"></div>
<div class="ab" style="left:244px;top:72px;width:502px;height:1px;background:#fbfaf2"></div>
<div class="ab" style="left:406px;top:72px;width:1px;height:14px;background:#8d8b7d"></div>
<div class="ab" style="left:407px;top:72px;width:1px;height:14px;background:#fbfaf2"></div>
<div class="ab" style="left:510.5px;top:72px;width:1px;height:14px;background:#8d8b7d"></div>
<div class="ab" style="left:511.5px;top:72px;width:1px;height:14px;background:#fbfaf2"></div>
<div class="ab" style="left:581.5px;top:72px;width:1px;height:14px;background:#8d8b7d"></div>
<div class="ab" style="left:582.5px;top:72px;width:1px;height:14px;background:#fbfaf2"></div>
<div class="ab" style="left:672.5px;top:72px;width:1px;height:14px;background:#8d8b7d"></div>
<div class="ab" style="left:673.5px;top:72px;width:1px;height:14px;background:#fbfaf2"></div>
<svg style="left:253px;top:76.5px;" width="7" height="7" viewBox="0 0 7 7"><path d="M0.5 0.5H6.5L3.5 6Z" fill="none" stroke="#808080" stroke-width="1"/></svg>
<div class="t" style="left:274px;transform-origin:0 0;top:76px;font-size:10px;transform:scaleX(0.8772);">Name</div>
<div class="t" style="left:436.7px;transform-origin:0 0;top:76px;font-size:10px;transform:scaleX(0.8995);">Modified</div>
<div class="t" style="left:556.55px;width:19.45px;transform-origin:100% 0;top:76px;font-size:10px;transform:scaleX(0.8225);">Size</div>
<div class="t" style="left:612px;transform-origin:0 0;top:76px;font-size:10px;transform:scaleX(0.8928);">Comment</div>
<div class="t" style="left:701.42px;width:40.58px;transform-origin:100% 0;top:76px;font-size:10px;transform:scaleX(0.9611);">Category</div>
<div class="ab" style="left:244px;top:87px;width:502px;height:363px;overflow:hidden">
<svg style="left:2px;top:1.90px" width="15" height="14" viewBox="0 0 15 14"><path d="M3.3 0.5H10.5L13.7 3.7V12.5H3.3Z" fill="#eef4ff" stroke="#5868b8" stroke-width="1"/><path d="M10.5 0.5V3.7H13.7" fill="#c8d4f4" stroke="#5868b8" stroke-width="0.8"/><circle cx="5.1" cy="8.5" r="3.9" fill="none" stroke="#e8502a" stroke-width="2.3" stroke-dasharray="6.2 30" transform="rotate(180 5.1 8.5)"/><circle cx="5.1" cy="8.5" r="3.9" fill="none" stroke="#48a838" stroke-width="2.3" stroke-dasharray="6.2 30" transform="rotate(270 5.1 8.5)"/><circle cx="5.1" cy="8.5" r="3.9" fill="none" stroke="#f0c828" stroke-width="2.3" stroke-dasharray="6.2 30" transform="rotate(0 5.1 8.5)"/><circle cx="5.1" cy="8.5" r="3.9" fill="none" stroke="#2a68d8" stroke-width="2.3" stroke-dasharray="6.2 30" transform="rotate(90 5.1 8.5)"/><circle cx="5.1" cy="8.5" r="2.75" fill="#f8f8f8"/><path d="M3.9999999999999996 6.6L7.0 8.5L3.9999999999999996 10.4Z" fill="#181818"/></svg>
<div class="t" style="left:22.69999999999999px;transform-origin:0 0;top:6px;font-size:10px;transform:scaleX(0.9166);">Classical music - Rene Fleming...</div>
<div class="t" style="left:168px;transform-origin:0 0;top:6px;font-size:10px;transform:scaleX(0.9690);">03.10.2002</div>
<div class="t" style="left:222.7px;transform-origin:0 0;top:6px;font-size:10px;transform:scaleX(0.9800);">15:08:11</div>
<div class="t" style="left:287.51px;width:44.49px;transform-origin:100% 0;top:6px;font-size:10px;transform:scaleX(0.9800);">3 451 297</div>
<div class="t" style="left:429.43px;width:70.57px;transform-origin:100% 0;top:6px;font-size:10px;transform:scaleX(0.9281);">cl-classique lyri.</div>
<svg style="left:2px;top:16.90px" width="15" height="14" viewBox="0 0 15 14"><path d="M3.3 0.5H10.5L13.7 3.7V12.5H3.3Z" fill="#eef4ff" stroke="#5868b8" stroke-width="1"/><path d="M10.5 0.5V3.7H13.7" fill="#c8d4f4" stroke="#5868b8" stroke-width="0.8"/><circle cx="5.1" cy="8.5" r="3.9" fill="none" stroke="#e8502a" stroke-width="2.3" stroke-dasharray="6.2 30" transform="rotate(180 5.1 8.5)"/><circle cx="5.1" cy="8.5" r="3.9" fill="none" stroke="#48a838" stroke-width="2.3" stroke-dasharray="6.2 30" transform="rotate(270 5.1 8.5)"/><circle cx="5.1" cy="8.5" r="3.9" fill="none" stroke="#f0c828" stroke-width="2.3" stroke-dasharray="6.2 30" transform="rotate(0 5.1 8.5)"/><circle cx="5.1" cy="8.5" r="3.9" fill="none" stroke="#2a68d8" stroke-width="2.3" stroke-dasharray="6.2 30" transform="rotate(90 5.1 8.5)"/><circle cx="5.1" cy="8.5" r="2.75" fill="#f8f8f8"/><path d="M3.9999999999999996 6.6L7.0 8.5L3.9999999999999996 10.4Z" fill="#181818"/></svg>
<div class="t" style="left:18.19999999999999px;transform-origin:0 0;top:21px;font-size:10px;transform:scaleX(1.0007);">+++-Verdi - Rigoletto - Gualtie...</div>
<div class="t" style="left:168px;transform-origin:0 0;top:21px;font-size:10px;transform:scaleX(0.9690);">04.10.2002</div>
<div class="t" style="left:222.7px;transform-origin:0 0;top:21px;font-size:10px;transform:scaleX(0.9800);">4:51:28</div>
<div class="t" style="left:281.95px;width:50.05px;transform-origin:100% 0;top:21px;font-size:10px;transform:scaleX(0.9800);">14 799 018</div>
<div class="t" style="left:429.43px;width:70.57px;transform-origin:100% 0;top:21px;font-size:10px;transform:scaleX(0.9281);">cl-classique lyri.</div>
<svg style="left:2px;top:31.90px" width="15" height="14" viewBox="0 0 15 14"><path d="M3.3 0.5H10.5L13.7 3.7V12.5H3.3Z" fill="#eef4ff" stroke="#5868b8" stroke-width="1"/><path d="M10.5 0.5V3.7H13.7" fill="#c8d4f4" stroke="#5868b8" stroke-width="0.8"/><circle cx="5.1" cy="8.5" r="3.9" fill="none" stroke="#e8502a" stroke-width="2.3" stroke-dasharray="6.2 30" transform="rotate(180 5.1 8.5)"/><circle cx="5.1" cy="8.5" r="3.9" fill="none" stroke="#48a838" stroke-width="2.3" stroke-dasharray="6.2 30" transform="rotate(270 5.1 8.5)"/><circle cx="5.1" cy="8.5" r="3.9" fill="none" stroke="#f0c828" stroke-width="2.3" stroke-dasharray="6.2 30" transform="rotate(0 5.1 8.5)"/><circle cx="5.1" cy="8.5" r="3.9" fill="none" stroke="#2a68d8" stroke-width="2.3" stroke-dasharray="6.2 30" transform="rotate(90 5.1 8.5)"/><circle cx="5.1" cy="8.5" r="2.75" fill="#f8f8f8"/><path d="M3.9999999999999996 6.6L7.0 8.5L3.9999999999999996 10.4Z" fill="#181818"/></svg>
<div class="t" style="left:18.19999999999999px;transform-origin:0 0;top:36px;font-size:10px;transform:scaleX(0.9983);">+++-Verdi, Giuseppe - Rigolett...</div>
<div class="t" style="left:168px;transform-origin:0 0;top:36px;font-size:10px;transform:scaleX(0.9690);">04.10.2002</div>
<div class="t" style="left:222.7px;transform-origin:0 0;top:36px;font-size:10px;transform:scaleX(0.9800);">13:11:13</div>
<div class="t" style="left:287.51px;width:44.49px;transform-origin:100% 0;top:36px;font-size:10px;transform:scaleX(0.9800);">5 785 600</div>
<div class="t" style="left:429.43px;width:70.57px;transform-origin:100% 0;top:36px;font-size:10px;transform:scaleX(0.9281);">cl-classique lyri.</div>
<svg style="left:2px;top:46.90px" width="15" height="14" viewBox="0 0 15 14"><path d="M3.3 0.5H10.5L13.7 3.7V12.5H3.3Z" fill="#eef4ff" stroke="#5868b8" stroke-width="1"/><path d="M10.5 0.5V3.7H13.7" fill="#c8d4f4" stroke="#5868b8" stroke-width="0.8"/><circle cx="5.1" cy="8.5" r="3.9" fill="none" stroke="#e8502a" stroke-width="2.3" stroke-dasharray="6.2 30" transform="rotate(180 5.1 8.5)"/><circle cx="5.1" cy="8.5" r="3.9" fill="none" stroke="#48a838" stroke-width="2.3" stroke-dasharray="6.2 30" transform="rotate(270 5.1 8.5)"/><circle cx="5.1" cy="8.5" r="3.9" fill="none" stroke="#f0c828" stroke-width="2.3" stroke-dasharray="6.2 30" transform="rotate(0 5.1 8.5)"/><circle cx="5.1" cy="8.5" r="3.9" fill="none" stroke="#2a68d8" stroke-width="2.3" stroke-dasharray="6.2 30" transform="rotate(90 5.1 8.5)"/><circle cx="5.1" cy="8.5" r="2.75" fill="#f8f8f8"/><path d="M3.9999999999999996 6.6L7.0 8.5L3.9999999999999996 10.4Z" fill="#181818"/></svg>
<div class="t" style="left:18.19999999999999px;transform-origin:0 0;top:51px;font-size:10px;transform:scaleX(1.0138);">++-Verdi - Rigoletto - Figlia!......</div>
<div class="t" style="left:168px;transform-origin:0 0;top:51px;font-size:10px;transform:scaleX(0.9690);">03.10.2002</div>
<div class="t" style="left:222.7px;transform-origin:0 0;top:51px;font-size:10px;transform:scaleX(0.9800);">17:01:02</div>
<div class="t" style="left:287.51px;width:44.49px;transform-origin:100% 0;top:51px;font-size:10px;transform:scaleX(0.9800);">4 920 216</div>
<div class="t" style="left:429.43px;width:70.57px;transform-origin:100% 0;top:51px;font-size:10px;transform:scaleX(0.9281);">cl-classique lyri.</div>
<svg style="left:2px;top:61.90px" width="15" height="14" viewBox="0 0 15 14"><path d="M3.3 0.5H10.5L13.7 3.7V12.5H3.3Z" fill="#eef4ff" stroke="#5868b8" stroke-width="1"/><path d="M10.5 0.5V3.7H13.7" fill="#c8d4f4" stroke="#5868b8" stroke-width="0.8"/><circle cx="5.1" cy="8.5" r="3.9" fill="none" stroke="#e8502a" stroke-width="2.3" stroke-dasharray="6.2 30" transform="rotate(180 5.1 8.5)"/><circle cx="5.1" cy="8.5" r="3.9" fill="none" stroke="#48a838" stroke-width="2.3" stroke-dasharray="6.2 30" transform="rotate(270 5.1 8.5)"/><circle cx="5.1" cy="8.5" r="3.9" fill="none" stroke="#f0c828" stroke-width="2.3" stroke-dasharray="6.2 30" transform="rotate(0 5.1 8.5)"/><circle cx="5.1" cy="8.5" r="3.9" fill="none" stroke="#2a68d8" stroke-width="2.3" stroke-dasharray="6.2 30" transform="rotate(90 5.1 8.5)"/><circle cx="5.1" cy="8.5" r="2.75" fill="#f8f8f8"/><path d="M3.9999999999999996 6.6L7.0 8.5L3.9999999999999996 10.4Z" fill="#181818"/></svg>
<div class="t" style="left:18.19999999999999px;transform-origin:0 0;top:66px;font-size:10px;transform:scaleX(0.9840);">+-G. Verdi - Duetto Aida Amon...</div>
<div class="t" style="left:168px;transform-origin:0 0;top:66px;font-size:10px;transform:scaleX(0.9690);">03.10.2002</div>
<div class="t" style="left:222.7px;transform-origin:0 0;top:66px;font-size:10px;transform:scaleX(0.9800);">15:23:15</div>
<div class="t" style="left:287.51px;width:44.49px;transform-origin:100% 0;top:66px;font-size:10px;transform:scaleX(0.9800);">9 165 641</div>
<div class="t" style="left:429.43px;width:70.57px;transform-origin:100% 0;top:66px;font-size:10px;transform:scaleX(0.9281);">cl-classique lyri.</div>
<svg style="left:2px;top:76.90px" width="15" height="14" viewBox="0 0 15 14"><path d="M3.3 0.5H10.5L13.7 3.7V12.5H3.3Z" fill="#eef4ff" stroke="#5868b8" stroke-width="1"/><path d="M10.5 0.5V3.7H13.7" fill="#c8d4f4" stroke="#5868b8" stroke-width="0.8"/><circle cx="5.1" cy="8.5" r="3.9" fill="none" stroke="#e8502a" stroke-width="2.3" stroke-dasharray="6.2 30" transform="rotate(180 5.1 8.5)"/><circle cx="5.1" cy="8.5" r="3.9" fill="none" stroke="#48a838" stroke-width="2.3" stroke-dasharray="6.2 30" transform="rotate(270 5.1 8.5)"/><circle cx="5.1" cy="8.5" r="3.9" fill="none" stroke="#f0c828" stroke-width="2.3" stroke-dasharray="6.2 30" transform="rotate(0 5.1 8.5)"/><circle cx="5.1" cy="8.5" r="3.9" fill="none" stroke="#2a68d8" stroke-width="2.3" stroke-dasharray="6.2 30" transform="rotate(90 5.1 8.5)"/><circle cx="5.1" cy="8.5" r="2.75" fill="#f8f8f8"/><path d="M3.9999999999999996 6.6L7.0 8.5L3.9999999999999996 10.4Z" fill="#181818"/></svg>
<div class="t" style="left:18.19999999999999px;transform-origin:0 0;top:81px;font-size:10px;transform:scaleX(0.9515);">+-G. Verdi - Romanza Aida.mp3</div>
<div class="t" style="left:168px;transform-origin:0 0;top:81px;font-size:10px;transform:scaleX(0.9690);">03.10.2002</div>
<div class="t" style="left:222.7px;transform-origin:0 0;top:81px;font-size:10px;transform:scaleX(0.9800);">15:11:57</div>
<div class="t" style="left:287.51px;width:44.49px;transform-origin:100% 0;top:81px;font-size:10px;transform:scaleX(0.9800);">6 806 308</div>
<div class="t" style="left:429.43px;width:70.57px;transform-origin:100% 0;top:81px;font-size:10px;transform:scaleX(0.9281);">cl-classique lyri.</div>
<svg style="left:2px;top:91.90px" width="15" height="14" viewBox="0 0 15 14"><path d="M3.3 0.5H10.5L13.7 3.7V12.5H3.3Z" fill="#eef4ff" stroke="#5868b8" stroke-width="1"/><path d="M10.5 0.5V3.7H13.7" fill="#c8d4f4" stroke="#5868b8" stroke-width="0.8"/><circle cx="5.1" cy="8.5" r="3.9" fill="none" stroke="#e8502a" stroke-width="2.3" stroke-dasharray="6.2 30" transform="rotate(180 5.1 8.5)"/><circle cx="5.1" cy="8.5" r="3.9" fill="none" stroke="#48a838" stroke-width="2.3" stroke-dasharray="6.2 30" transform="rotate(270 5.1 8.5)"/><circle cx="5.1" cy="8.5" r="3.9" fill="none" stroke="#f0c828" stroke-width="2.3" stroke-dasharray="6.2 30" transform="rotate(0 5.1 8.5)"/><circle cx="5.1" cy="8.5" r="3.9" fill="none" stroke="#2a68d8" stroke-width="2.3" stroke-dasharray="6.2 30" transform="rotate(90 5.1 8.5)"/><circle cx="5.1" cy="8.5" r="2.75" fill="#f8f8f8"/><path d="M3.9999999999999996 6.6L7.0 8.5L3.9999999999999996 10.4Z" fill="#181818"/></svg>
<div class="t" style="left:18.19999999999999px;transform-origin:0 0;top:96px;font-size:10px;transform:scaleX(0.9500);">04 - Verdi _ Don Carlo - Ella giammai...</div>
<div class="t" style="left:168px;transform-origin:0 0;top:96px;font-size:10px;transform:scaleX(0.9690);">03.10.2002</div>
<div class="t" style="left:222.7px;transform-origin:0 0;top:96px;font-size:10px;transform:scaleX(0.9800);">15:00:00</div>
<div class="t" style="left:287.51px;width:44.49px;transform-origin:100% 0;top:96px;font-size:10px;transform:scaleX(0.9800);">5 000 000</div>
<div class="t" style="left:429.43px;width:70.57px;transform-origin:100% 0;top:96px;font-size:10px;transform:scaleX(0.9281);">cl-classique lyri.</div>
<svg style="left:2px;top:106.90px" width="15" height="14" viewBox="0 0 15 14"><path d="M3.3 0.5H10.5L13.7 3.7V12.5H3.3Z" fill="#eef4ff" stroke="#5868b8" stroke-width="1"/><path d="M10.5 0.5V3.7H13.7" fill="#c8d4f4" stroke="#5868b8" stroke-width="0.8"/><circle cx="5.1" cy="8.5" r="3.9" fill="none" stroke="#e8502a" stroke-width="2.3" stroke-dasharray="6.2 30" transform="rotate(180 5.1 8.5)"/><circle cx="5.1" cy="8.5" r="3.9" fill="none" stroke="#48a838" stroke-width="2.3" stroke-dasharray="6.2 30" transform="rotate(270 5.1 8.5)"/><circle cx="5.1" cy="8.5" r="3.9" fill="none" stroke="#f0c828" stroke-width="2.3" stroke-dasharray="6.2 30" transform="rotate(0 5.1 8.5)"/><circle cx="5.1" cy="8.5" r="3.9" fill="none" stroke="#2a68d8" stroke-width="2.3" stroke-dasharray="6.2 30" transform="rotate(90 5.1 8.5)"/><circle cx="5.1" cy="8.5" r="2.75" fill="#f8f8f8"/><path d="M3.9999999999999996 6.6L7.0 8.5L3.9999999999999996 10.4Z" fill="#181818"/></svg>
<div class="t" style="left:18.19999999999999px;transform-origin:0 0;top:111px;font-size:10px;transform:scaleX(0.9500);">Andrea Bocelli -- Via...</div>
<div class="t" style="left:429.43px;width:70.57px;transform-origin:100% 0;top:111px;font-size:10px;transform:scaleX(0.9281);">cl-classique lyri.</div>
<svg style="left:2px;top:121.90px" width="15" height="14" viewBox="0 0 15 14"><path d="M3.3 0.5H10.5L13.7 3.7V12.5H3.3Z" fill="#eef4ff" stroke="#5868b8" stroke-width="1"/><path d="M10.5 0.5V3.7H13.7" fill="#c8d4f4" stroke="#5868b8" stroke-width="0.8"/><circle cx="5.1" cy="8.5" r="3.9" fill="none" stroke="#e8502a" stroke-width="2.3" stroke-dasharray="6.2 30" transform="rotate(180 5.1 8.5)"/><circle cx="5.1" cy="8.5" r="3.9" fill="none" stroke="#48a838" stroke-width="2.3" stroke-dasharray="6.2 30" transform="rotate(270 5.1 8.5)"/><circle cx="5.1" cy="8.5" r="3.9" fill="none" stroke="#f0c828" stroke-width="2.3" stroke-dasharray="6.2 30" transform="rotate(0 5.1 8.5)"/><circle cx="5.1" cy="8.5" r="3.9" fill="none" stroke="#2a68d8" stroke-width="2.3" stroke-dasharray="6.2 30" transform="rotate(90 5.1 8.5)"/><circle cx="5.1" cy="8.5" r="2.75" fill="#f8f8f8"/><path d="M3.9999999999999996 6.6L7.0 8.5L3.9999999999999996 10.4Z" fill="#181818"/></svg>
<div class="t" style="left:18.19999999999999px;transform-origin:0 0;top:126px;font-size:10px;transform:scaleX(0.9500);">Andrea Bocelli Verdi - ...</div>
<div class="t" style="left:429.43px;width:70.57px;transform-origin:100% 0;top:126px;font-size:10px;transform:scaleX(0.9281);">cl-classique lyri.</div>
<svg style="left:2px;top:136.90px" width="15" height="14" viewBox="0 0 15 14"><path d="M3.3 0.5H10.5L13.7 3.7V12.5H3.3Z" fill="#eef4ff" stroke="#5868b8" stroke-width="1"/><path d="M10.5 0.5V3.7H13.7" fill="#c8d4f4" stroke="#5868b8" stroke-width="0.8"/><circle cx="5.1" cy="8.5" r="3.9" fill="none" stroke="#e8502a" stroke-width="2.3" stroke-dasharray="6.2 30" transform="rotate(180 5.1 8.5)"/><circle cx="5.1" cy="8.5" r="3.9" fill="none" stroke="#48a838" stroke-width="2.3" stroke-dasharray="6.2 30" transform="rotate(270 5.1 8.5)"/><circle cx="5.1" cy="8.5" r="3.9" fill="none" stroke="#f0c828" stroke-width="2.3" stroke-dasharray="6.2 30" transform="rotate(0 5.1 8.5)"/><circle cx="5.1" cy="8.5" r="3.9" fill="none" stroke="#2a68d8" stroke-width="2.3" stroke-dasharray="6.2 30" transform="rotate(90 5.1 8.5)"/><circle cx="5.1" cy="8.5" r="2.75" fill="#f8f8f8"/><path d="M3.9999999999999996 6.6L7.0 8.5L3.9999999999999996 10.4Z" fill="#181818"/></svg>
<div class="t" style="left:18.19999999999999px;transform-origin:0 0;top:141px;font-size:10px;transform:scaleX(0.9500);">Andrea Bocelli Verdi - ...</div>
<div class="t" style="left:429.43px;width:70.57px;transform-origin:100% 0;top:141px;font-size:10px;transform:scaleX(0.9281);">cl-classique lyri.</div>
<svg style="left:2px;top:151.90px" width="15" height="14" viewBox="0 0 15 14"><path d="M3.3 0.5H10.5L13.7 3.7V12.5H3.3Z" fill="#eef4ff" stroke="#5868b8" stroke-width="1"/><path d="M10.5 0.5V3.7H13.7" fill="#c8d4f4" stroke="#5868b8" stroke-width="0.8"/><circle cx="5.1" cy="8.5" r="3.9" fill="none" stroke="#e8502a" stroke-width="2.3" stroke-dasharray="6.2 30" transform="rotate(180 5.1 8.5)"/><circle cx="5.1" cy="8.5" r="3.9" fill="none" stroke="#48a838" stroke-width="2.3" stroke-dasharray="6.2 30" transform="rotate(270 5.1 8.5)"/><circle cx="5.1" cy="8.5" r="3.9" fill="none" stroke="#f0c828" stroke-width="2.3" stroke-dasharray="6.2 30" transform="rotate(0 5.1 8.5)"/><circle cx="5.1" cy="8.5" r="3.9" fill="none" stroke="#2a68d8" stroke-width="2.3" stroke-dasharray="6.2 30" transform="rotate(90 5.1 8.5)"/><circle cx="5.1" cy="8.5" r="2.75" fill="#f8f8f8"/><path d="M3.9999999999999996 6.6L7.0 8.5L3.9999999999999996 10.4Z" fill="#181818"/></svg>
<div class="t" style="left:18.19999999999999px;transform-origin:0 0;top:156px;font-size:10px;transform:scaleX(0.9500);">guiseppe verdi - Gerusalemme...</div>
<div class="t" style="left:429.43px;width:70.57px;transform-origin:100% 0;top:156px;font-size:10px;transform:scaleX(0.9281);">cl-classique lyri.</div>
<svg style="left:2px;top:166.90px" width="15" height="14" viewBox="0 0 15 14"><path d="M3.3 0.5H10.5L13.7 3.7V12.5H3.3Z" fill="#eef4ff" stroke="#5868b8" stroke-width="1"/><path d="M10.5 0.5V3.7H13.7" fill="#c8d4f4" stroke="#5868b8" stroke-width="0.8"/><circle cx="5.1" cy="8.5" r="3.9" fill="none" stroke="#e8502a" stroke-width="2.3" stroke-dasharray="6.2 30" transform="rotate(180 5.1 8.5)"/><circle cx="5.1" cy="8.5" r="3.9" fill="none" stroke="#48a838" stroke-width="2.3" stroke-dasharray="6.2 30" transform="rotate(270 5.1 8.5)"/><circle cx="5.1" cy="8.5" r="3.9" fill="none" stroke="#f0c828" stroke-width="2.3" stroke-dasharray="6.2 30" transform="rotate(0 5.1 8.5)"/><circle cx="5.1" cy="8.5" r="3.9" fill="none" stroke="#2a68d8" stroke-width="2.3" stroke-dasharray="6.2 30" transform="rotate(90 5.1 8.5)"/><circle cx="5.1" cy="8.5" r="2.75" fill="#f8f8f8"/><path d="M3.9999999999999996 6.6L7.0 8.5L3.9999999999999996 10.4Z" fill="#181818"/></svg>
<div class="t" style="left:18.19999999999999px;transform-origin:0 0;top:171px;font-size:10px;transform:scaleX(0.9500);">Verdi - [Carreras, Freni]...</div>
<div class="t" style="left:429.43px;width:70.57px;transform-origin:100% 0;top:171px;font-size:10px;transform:scaleX(0.9281);">cl-classique lyri.</div>
<svg style="left:2px;top:181.90px" width="15" height="14" viewBox="0 0 15 14"><path d="M3.3 0.5H10.5L13.7 3.7V12.5H3.3Z" fill="#eef4ff" stroke="#5868b8" stroke-width="1"/><path d="M10.5 0.5V3.7H13.7" fill="#c8d4f4" stroke="#5868b8" stroke-width="0.8"/><circle cx="5.1" cy="8.5" r="3.9" fill="none" stroke="#e8502a" stroke-width="2.3" stroke-dasharray="6.2 30" transform="rotate(180 5.1 8.5)"/><circle cx="5.1" cy="8.5" r="3.9" fill="none" stroke="#48a838" stroke-width="2.3" stroke-dasharray="6.2 30" transform="rotate(270 5.1 8.5)"/><circle cx="5.1" cy="8.5" r="3.9" fill="none" stroke="#f0c828" stroke-width="2.3" stroke-dasharray="6.2 30" transform="rotate(0 5.1 8.5)"/><circle cx="5.1" cy="8.5" r="3.9" fill="none" stroke="#2a68d8" stroke-width="2.3" stroke-dasharray="6.2 30" transform="rotate(90 5.1 8.5)"/><circle cx="5.1" cy="8.5" r="2.75" fill="#f8f8f8"/><path d="M3.9999999999999996 6.6L7.0 8.5L3.9999999999999996 10.4Z" fill="#181818"/></svg>
<div class="t" style="left:18.19999999999999px;transform-origin:0 0;top:186px;font-size:10px;transform:scaleX(0.9500);">Verdi - [Carreras, Freni]...</div>
<div class="t" style="left:429.43px;width:70.57px;transform-origin:100% 0;top:186px;font-size:10px;transform:scaleX(0.9281);">cl-classique lyri.</div>
<svg style="left:2px;top:196.90px" width="15" height="14" viewBox="0 0 15 14"><path d="M3.3 0.5H10.5L13.7 3.7V12.5H3.3Z" fill="#eef4ff" stroke="#5868b8" stroke-width="1"/><path d="M10.5 0.5V3.7H13.7" fill="#c8d4f4" stroke="#5868b8" stroke-width="0.8"/><circle cx="5.1" cy="8.5" r="3.9" fill="none" stroke="#e8502a" stroke-width="2.3" stroke-dasharray="6.2 30" transform="rotate(180 5.1 8.5)"/><circle cx="5.1" cy="8.5" r="3.9" fill="none" stroke="#48a838" stroke-width="2.3" stroke-dasharray="6.2 30" transform="rotate(270 5.1 8.5)"/><circle cx="5.1" cy="8.5" r="3.9" fill="none" stroke="#f0c828" stroke-width="2.3" stroke-dasharray="6.2 30" transform="rotate(0 5.1 8.5)"/><circle cx="5.1" cy="8.5" r="3.9" fill="none" stroke="#2a68d8" stroke-width="2.3" stroke-dasharray="6.2 30" transform="rotate(90 5.1 8.5)"/><circle cx="5.1" cy="8.5" r="2.75" fill="#f8f8f8"/><path d="M3.9999999999999996 6.6L7.0 8.5L3.9999999999999996 10.4Z" fill="#181818"/></svg>
<div class="t" style="left:18.19999999999999px;transform-origin:0 0;top:201px;font-size:10px;transform:scaleX(0.9500);">Verdi - [Freni, Carreras...</div>
<div class="t" style="left:429.43px;width:70.57px;transform-origin:100% 0;top:201px;font-size:10px;transform:scaleX(0.9281);">cl-classique lyri.</div>
<svg style="left:2px;top:211.90px" width="15" height="14" viewBox="0 0 15 14"><path d="M3.3 0.5H10.5L13.7 3.7V12.5H3.3Z" fill="#eef4ff" stroke="#5868b8" stroke-width="1"/><path d="M10.5 0.5V3.7H13.7" fill="#c8d4f4" stroke="#5868b8" stroke-width="0.8"/><circle cx="5.1" cy="8.5" r="3.9" fill="none" stroke="#e8502a" stroke-width="2.3" stroke-dasharray="6.2 30" transform="rotate(180 5.1 8.5)"/><circle cx="5.1" cy="8.5" r="3.9" fill="none" stroke="#48a838" stroke-width="2.3" stroke-dasharray="6.2 30" transform="rotate(270 5.1 8.5)"/><circle cx="5.1" cy="8.5" r="3.9" fill="none" stroke="#f0c828" stroke-width="2.3" stroke-dasharray="6.2 30" transform="rotate(0 5.1 8.5)"/><circle cx="5.1" cy="8.5" r="3.9" fill="none" stroke="#2a68d8" stroke-width="2.3" stroke-dasharray="6.2 30" transform="rotate(90 5.1 8.5)"/><circle cx="5.1" cy="8.5" r="2.75" fill="#f8f8f8"/><path d="M3.9999999999999996 6.6L7.0 8.5L3.9999999999999996 10.4Z" fill="#181818"/></svg>
<div class="t" style="left:18.19999999999999px;transform-origin:0 0;top:216px;font-size:10px;transform:scaleX(0.9500);">Verdi - [Freni, Carreras...</div>
<div class="t" style="left:429.43px;width:70.57px;transform-origin:100% 0;top:216px;font-size:10px;transform:scaleX(0.9281);">cl-classique lyri.</div>
<svg style="left:2px;top:226.90px" width="15" height="14" viewBox="0 0 15 14"><path d="M3.3 0.5H10.5L13.7 3.7V12.5H3.3Z" fill="#eef4ff" stroke="#5868b8" stroke-width="1"/><path d="M10.5 0.5V3.7H13.7" fill="#c8d4f4" stroke="#5868b8" stroke-width="0.8"/><circle cx="5.1" cy="8.5" r="3.9" fill="none" stroke="#e8502a" stroke-width="2.3" stroke-dasharray="6.2 30" transform="rotate(180 5.1 8.5)"/><circle cx="5.1" cy="8.5" r="3.9" fill="none" stroke="#48a838" stroke-width="2.3" stroke-dasharray="6.2 30" transform="rotate(270 5.1 8.5)"/><circle cx="5.1" cy="8.5" r="3.9" fill="none" stroke="#f0c828" stroke-width="2.3" stroke-dasharray="6.2 30" transform="rotate(0 5.1 8.5)"/><circle cx="5.1" cy="8.5" r="3.9" fill="none" stroke="#2a68d8" stroke-width="2.3" stroke-dasharray="6.2 30" transform="rotate(90 5.1 8.5)"/><circle cx="5.1" cy="8.5" r="2.75" fill="#f8f8f8"/><path d="M3.9999999999999996 6.6L7.0 8.5L3.9999999999999996 10.4Z" fill="#181818"/></svg>
<div class="t" style="left:18.19999999999999px;transform-origin:0 0;top:231px;font-size:10px;transform:scaleX(0.9500);">Verdi - [Freni, Carreras...</div>
<div class="t" style="left:429.43px;width:70.57px;transform-origin:100% 0;top:231px;font-size:10px;transform:scaleX(0.9281);">cl-classique lyri.</div>
<svg style="left:2px;top:241.90px" width="15" height="14" viewBox="0 0 15 14"><path d="M3.3 0.5H10.5L13.7 3.7V12.5H3.3Z" fill="#eef4ff" stroke="#5868b8" stroke-width="1"/><path d="M10.5 0.5V3.7H13.7" fill="#c8d4f4" stroke="#5868b8" stroke-width="0.8"/><circle cx="5.1" cy="8.5" r="3.9" fill="none" stroke="#e8502a" stroke-width="2.3" stroke-dasharray="6.2 30" transform="rotate(180 5.1 8.5)"/><circle cx="5.1" cy="8.5" r="3.9" fill="none" stroke="#48a838" stroke-width="2.3" stroke-dasharray="6.2 30" transform="rotate(270 5.1 8.5)"/><circle cx="5.1" cy="8.5" r="3.9" fill="none" stroke="#f0c828" stroke-width="2.3" stroke-dasharray="6.2 30" transform="rotate(0 5.1 8.5)"/><circle cx="5.1" cy="8.5" r="3.9" fill="none" stroke="#2a68d8" stroke-width="2.3" stroke-dasharray="6.2 30" transform="rotate(90 5.1 8.5)"/><circle cx="5.1" cy="8.5" r="2.75" fill="#f8f8f8"/><path d="M3.9999999999999996 6.6L7.0 8.5L3.9999999999999996 10.4Z" fill="#181818"/></svg>
<div class="t" style="left:18.19999999999999px;transform-origin:0 0;top:246px;font-size:10px;transform:scaleX(0.9500);">Verdi - Il Trovatore - Stride...</div>
<div class="t" style="left:429.43px;width:70.57px;transform-origin:100% 0;top:246px;font-size:10px;transform:scaleX(0.9281);">cl-classique lyri.</div>
<svg style="left:2px;top:256.90px" width="15" height="14" viewBox="0 0 15 14"><path d="M3.3 0.5H10.5L13.7 3.7V12.5H3.3Z" fill="#eef4ff" stroke="#5868b8" stroke-width="1"/><path d="M10.5 0.5V3.7H13.7" fill="#c8d4f4" stroke="#5868b8" stroke-width="0.8"/><circle cx="5.1" cy="8.5" r="3.9" fill="none" stroke="#e8502a" stroke-width="2.3" stroke-dasharray="6.2 30" transform="rotate(180 5.1 8.5)"/><circle cx="5.1" cy="8.5" r="3.9" fill="none" stroke="#48a838" stroke-width="2.3" stroke-dasharray="6.2 30" transform="rotate(270 5.1 8.5)"/><circle cx="5.1" cy="8.5" r="3.9" fill="none" stroke="#f0c828" stroke-width="2.3" stroke-dasharray="6.2 30" transform="rotate(0 5.1 8.5)"/><circle cx="5.1" cy="8.5" r="3.9" fill="none" stroke="#2a68d8" stroke-width="2.3" stroke-dasharray="6.2 30" transform="rotate(90 5.1 8.5)"/><circle cx="5.1" cy="8.5" r="2.75" fill="#f8f8f8"/><path d="M3.9999999999999996 6.6L7.0 8.5L3.9999999999999996 10.4Z" fill="#181818"/></svg>
<div class="t" style="left:18.19999999999999px;transform-origin:0 0;top:261px;font-size:10px;transform:scaleX(0.9500);">Verdi - Nabucco  Albert...</div>
<div class="t" style="left:429.43px;width:70.57px;transform-origin:100% 0;top:261px;font-size:10px;transform:scaleX(0.9281);">cl-classique lyri.</div>
<svg style="left:2px;top:271.90px" width="15" height="14" viewBox="0 0 15 14"><path d="M3.3 0.5H10.5L13.7 3.7V12.5H3.3Z" fill="#eef4ff" stroke="#5868b8" stroke-width="1"/><path d="M10.5 0.5V3.7H13.7" fill="#c8d4f4" stroke="#5868b8" stroke-width="0.8"/><circle cx="5.1" cy="8.5" r="3.9" fill="none" stroke="#e8502a" stroke-width="2.3" stroke-dasharray="6.2 30" transform="rotate(180 5.1 8.5)"/><circle cx="5.1" cy="8.5" r="3.9" fill="none" stroke="#48a838" stroke-width="2.3" stroke-dasharray="6.2 30" transform="rotate(270 5.1 8.5)"/><circle cx="5.1" cy="8.5" r="3.9" fill="none" stroke="#f0c828" stroke-width="2.3" stroke-dasharray="6.2 30" transform="rotate(0 5.1 8.5)"/><circle cx="5.1" cy="8.5" r="3.9" fill="none" stroke="#2a68d8" stroke-width="2.3" stroke-dasharray="6.2 30" transform="rotate(90 5.1 8.5)"/><circle cx="5.1" cy="8.5" r="2.75" fill="#f8f8f8"/><path d="M3.9999999999999996 6.6L7.0 8.5L3.9999999999999996 10.4Z" fill="#181818"/></svg>
<div class="t" style="left:18.19999999999999px;transform-origin:0 0;top:276px;font-size:10px;transform:scaleX(0.9500);">verdi - nabucco- ov...</div>
<div class="t" style="left:429.43px;width:70.57px;transform-origin:100% 0;top:276px;font-size:10px;transform:scaleX(0.9281);">cl-classique lyri.</div>
<svg style="left:2px;top:286.90px" width="15" height="14" viewBox="0 0 15 14"><path d="M3.3 0.5H10.5L13.7 3.7V12.5H3.3Z" fill="#eef4ff" stroke="#5868b8" stroke-width="1"/><path d="M10.5 0.5V3.7H13.7" fill="#c8d4f4" stroke="#5868b8" stroke-width="0.8"/><circle cx="5.1" cy="8.5" r="3.9" fill="none" stroke="#e8502a" stroke-width="2.3" stroke-dasharray="6.2 30" transform="rotate(180 5.1 8.5)"/><circle cx="5.1" cy="8.5" r="3.9" fill="none" stroke="#48a838" stroke-width="2.3" stroke-dasharray="6.2 30" transform="rotate(270 5.1 8.5)"/><circle cx="5.1" cy="8.5" r="3.9" fill="none" stroke="#f0c828" stroke-width="2.3" stroke-dasharray="6.2 30" transform="rotate(0 5.1 8.5)"/><circle cx="5.1" cy="8.5" r="3.9" fill="none" stroke="#2a68d8" stroke-width="2.3" stroke-dasharray="6.2 30" transform="rotate(90 5.1 8.5)"/><circle cx="5.1" cy="8.5" r="2.75" fill="#f8f8f8"/><path d="M3.9999999999999996 6.6L7.0 8.5L3.9999999999999996 10.4Z" fill="#181818"/></svg>
<div class="t" style="left:18.19999999999999px;transform-origin:0 0;top:291px;font-size:10px;transform:scaleX(0.9500);">Verdi - Rigoletto (Serenata...</div>
<div class="t" style="left:429.43px;width:70.57px;transform-origin:100% 0;top:291px;font-size:10px;transform:scaleX(0.9281);">cl-classique lyri.</div>
<svg style="left:2px;top:301.90px" width="15" height="14" viewBox="0 0 15 14"><path d="M3.3 0.5H10.5L13.7 3.7V12.5H3.3Z" fill="#eef4ff" stroke="#5868b8" stroke-width="1"/><path d="M10.5 0.5V3.7H13.7" fill="#c8d4f4" stroke="#5868b8" stroke-width="0.8"/><circle cx="5.1" cy="8.5" r="3.9" fill="none" stroke="#e8502a" stroke-width="2.3" stroke-dasharray="6.2 30" transform="rotate(180 5.1 8.5)"/><circle cx="5.1" cy="8.5" r="3.9" fill="none" stroke="#48a838" stroke-width="2.3" stroke-dasharray="6.2 30" transform="rotate(270 5.1 8.5)"/><circle cx="5.1" cy="8.5" r="3.9" fill="none" stroke="#f0c828" stroke-width="2.3" stroke-dasharray="6.2 30" transform="rotate(0 5.1 8.5)"/><circle cx="5.1" cy="8.5" r="3.9" fill="none" stroke="#2a68d8" stroke-width="2.3" stroke-dasharray="6.2 30" transform="rotate(90 5.1 8.5)"/><circle cx="5.1" cy="8.5" r="2.75" fill="#f8f8f8"/><path d="M3.9999999999999996 6.6L7.0 8.5L3.9999999999999996 10.4Z" fill="#181818"/></svg>
<div class="t" style="left:18.19999999999999px;transform-origin:0 0;top:306px;font-size:10px;transform:scaleX(0.9500);">verdi - Rigoletto 2.mp3</div>
<div class="t" style="left:429.43px;width:70.57px;transform-origin:100% 0;top:306px;font-size:10px;transform:scaleX(0.9281);">cl-classique lyri.</div>
</div>
<div class="ab" style="left:244px;top:450px;width:502px;height:14px;background:#f9f9f4"></div>
<div class="ab" style="left:244.5px;top:450.5px;width:13px;height:13px;border-radius:2px;border:1px solid #b5c8f4;background:linear-gradient(135deg,#d8e4fe,#b4c8f8)"></div>
<svg style="left:251.0px;top:457.0px" width="1" height="1" viewBox="0 0 1 1"><path d="M1.5 -3L-1.5 0L1.5 3" fill="none" stroke="#4d6185" stroke-width="1.8"/></svg>
<div class="ab" style="left:730px;top:450.5px;width:13px;height:13px;border-radius:2px;border:1px solid #b5c8f4;background:linear-gradient(135deg,#d8e4fe,#b4c8f8)"></div>
<svg style="left:736.5px;top:457.0px" width="1" height="1" viewBox="0 0 1 1"><path d="M-1.5 -3L1.5 0L-1.5 3" fill="none" stroke="#4d6185" stroke-width="1.8"/></svg>
<div class="ab" style="left:261px;top:450.5px;width:405px;height:13px;border-radius:2px;border:1px solid #b1c3f0;background:linear-gradient(#cdd9fc,#bccdfa)"></div>
<div class="ab" style="left:460.0px;top:454px;width:1px;height:6px;background:#a4b6e8"></div>
<div class="ab" style="left:462.2px;top:454px;width:1px;height:6px;background:#a4b6e8"></div>
<div class="ab" style="left:464.4px;top:454px;width:1px;height:6px;background:#a4b6e8"></div>
<div class="ab" style="left:466.6px;top:454px;width:1px;height:6px;background:#a4b6e8"></div>
<div class="ab" style="left:4px;top:464px;width:742px;height:20px;background:#ebebdc"></div>
<div class="ab" style="left:4px;top:464px;width:742px;height:1px;background:#fff"></div>
<div class="ab" style="left:10px;top:467px;width:550px;height:15px;border-top:1px solid #c4c1b0;border-left:1px solid #c4c1b0;border-bottom:1px solid #fff;border-right:1px solid #fff"></div>
<div class="ab" style="left:572px;top:467px;width:155px;height:15px;border-top:1px solid #c4c1b0;border-left:1px solid #c4c1b0;border-bottom:1px solid #fff;border-right:1px solid #fff"></div>
<div class="t" style="left:15.7px;transform-origin:0 0;top:470px;font-size:9.6px;transform:scaleX(0.9888);">CD MP3-18 CLASSC\VERDI\verdi - Rigoletto 2.mp3</div>
<div class="t" style="left:610px;transform-origin:0 0;top:470px;font-size:9.6px;transform:scaleX(0.9430);">0 folder(s), 21 file(s)</div>
<svg style="left:732px;top:470px;" width="13" height="13" viewBox="0 0 13 13"><path d="M12 2L2 12M12 6L6 12M12 10L10 12" stroke="#fff" stroke-width="1"/><path d="M12 3L3 12M12 7L7 12M12 11L11 12" stroke="#c4c1b0" stroke-width="1"/></svg>
<div class="ab" style="left:343px;top:175px;width:380px;height:266px;border-radius:7px 7px 0 0;background:linear-gradient(90deg,#0a34c8 0,#1a4ad8 3px,#1a4ad8 377px,#0a34c8 380px)"></div>
<div class="ab" style="left:343px;top:437px;width:380px;height:4px;background:linear-gradient(#1a4ad8,#0a30c0)"></div>
<div class="ab" style="left:343px;top:175px;width:380px;height:26px;border-radius:7px 7px 0 0;background:linear-gradient(#0a3cc0 0px,#2a78f6 1px,#3080f8 2.5px,#0c66f0 4px,#0058e0 9px,#005ae6 13px,#0862f2 18px,#0868f8 21px,#0860ec 24px,#0038b8 26px)"></div>
<div class="ab" style="left:347px;top:201px;width:372px;height:236px;background:#ebebdc"></div>
<svg style="left:349px;top:181.5px;" width="15" height="14" viewBox="0 0 15 14"><path d="M3.3 0.5H10.5L13.7 3.7V12.5H3.3Z" fill="#eef4ff" stroke="#5868b8" stroke-width="1"/><path d="M10.5 0.5V3.7H13.7" fill="#c8d4f4" stroke="#5868b8" stroke-width="0.8"/><circle cx="5.1" cy="8.5" r="3.9" fill="none" stroke="#e8502a" stroke-width="2.3" stroke-dasharray="6.2 30" transform="rotate(180 5.1 8.5)"/><circle cx="5.1" cy="8.5" r="3.9" fill="none" stroke="#48a838" stroke-width="2.3" stroke-dasharray="6.2 30" transform="rotate(270 5.1 8.5)"/><circle cx="5.1" cy="8.5" r="3.9" fill="none" stroke="#f0c828" stroke-width="2.3" stroke-dasharray="6.2 30" transform="rotate(0 5.1 8.5)"/><circle cx="5.1" cy="8.5" r="3.9" fill="none" stroke="#2a68d8" stroke-width="2.3" stroke-dasharray="6.2 30" transform="rotate(90 5.1 8.5)"/><circle cx="5.1" cy="8.5" r="2.75" fill="#f8f8f8"/><path d="M3.9999999999999996 6.6L7.0 8.5L3.9999999999999996 10.4Z" fill="#181818"/></svg>
<div class="t" style="left:366px;transform-origin:0 0;top:185px;font-size:11.5px;font-weight:bold;transform:scaleX(0.9677);color:#fff">MP3 Format Sound</div>
<div class="ab" style="left:699px;top:180.5px;width:18px;height:18px;border-radius:3px;border:1px solid #fff;background:linear-gradient(135deg,#f09070,#e05a38 50%,#c84020)"></div>
<svg style="left:703px;top:184.5px;" width="10" height="10" viewBox="0 0 10 10"><path d="M1 1L9 9M9 1L1 9" stroke="#fff" stroke-width="2"/></svg>
<div class="t" style="left:354.3px;transform-origin:0 0;top:214px;font-size:10.4px;transform:scaleX(0.8831);">Name</div>
<div class="t" style="left:354.3px;transform-origin:0 0;top:235px;font-size:10.4px;transform:scaleX(0.9028);">Location</div>
<div class="t" style="left:354.3px;transform-origin:0 0;top:256px;font-size:10.4px;transform:scaleX(0.9000);">Size</div>
<div class="t" style="left:354.3px;transform-origin:0 0;top:279px;font-size:10.4px;transform:scaleX(0.9000);">Date</div>
<div class="t" style="left:354.3px;transform-origin:0 0;top:302px;font-size:10.4px;transform:scaleX(0.8768);">Category</div>
<div class="t" style="left:354.3px;transform-origin:0 0;top:325px;font-size:10.4px;transform:scaleX(0.9000);">Comment</div>
<div class="t" style="left:421px;transform-origin:0 0;top:214px;font-size:10.4px;transform:scaleX(0.8889);">verdi - Rigoletto 2.mp3</div>
<div class="t" style="left:421px;transform-origin:0 0;top:235px;font-size:10.4px;transform:scaleX(1.0008);">H:\VERDI\</div>
<div class="t" style="left:421px;transform-origin:0 0;top:256px;font-size:10.4px;transform:scaleX(0.9025);">2.48MB (2 605 139 bytes)</div>
<div class="t" style="left:421px;transform-origin:0 0;top:279px;font-size:10.4px;transform:scaleX(0.9078);">05.10.2002  3:49:58</div>
<div class="ab" style="left:421px;top:297.5px;width:260px;height:17.5px;background:#fff;border:2px solid #8a887e;border-right:1px solid #f4f3ee;border-bottom:1px solid #f4f3ee"></div>
<div class="ab" style="left:423px;top:300px;width:242px;height:13px;background:#316ac5;outline:1px dotted #1a2a50;outline-offset:-1px"></div>
<div class="t" style="left:424px;transform-origin:0 0;top:303px;font-size:10.4px;transform:scaleX(0.8800);color:#fff">cl-classique lyrique</div>
<div class="ab" style="left:665.5px;top:299px;width:15px;height:15px;background:#ebebdc;border:1px solid #f8f7f0;border-right-color:#716f64;border-bottom-color:#716f64"></div>
<svg style="left:669px;top:304px;" width="7" height="4" viewBox="0 0 7 4"><path d="M0 0H7L3.5 4Z" fill="#000"/></svg>
<div class="ab" style="left:689.5px;top:297.5px;width:21.5px;height:18px;background:#ebebdc;border:1px solid #fff;border-right-color:#716f64;border-bottom-color:#716f64;box-shadow:inset -1px -1px 0 #aca899"></div>
<div class="t" style="left:695.97px;width:8.67px;transform-origin:50% 0;top:302px;font-size:10.4px;transform:scaleX(1.0000);">...</div>
<div class="ab" style="left:421px;top:323.3px;width:289px;height:55.7px;background:#fff;border:2px solid #8a887e;border-right:1px solid #f4f3ee;border-bottom:1px solid #f4f3ee"></div>
<div class="ab" style="left:695px;top:324px;width:14px;height:40px;background:#f4f3ee"></div>
<div class="ab" style="left:422px;top:364px;width:273px;height:14px;background:#f4f3ee"></div>
<div class="ab" style="left:695px;top:364px;width:14px;height:14px;background:#ebebdc"></div>
<div class="ab" style="left:695.5px;top:325.5px;width:13px;height:13px;border-radius:2px;border:1px solid #e8e6dc;background:#f0efe6"></div>
<svg style="left:702.0px;top:332.0px" width="1" height="1" viewBox="0 0 1 1"><path d="M-3 1.5L0 -1.5L3 1.5" fill="none" stroke="#cac8bc" stroke-width="1.6"/></svg>
<div class="ab" style="left:695.5px;top:349.5px;width:13px;height:13px;border-radius:2px;border:1px solid #e8e6dc;background:#f0efe6"></div>
<svg style="left:702.0px;top:356.0px" width="1" height="1" viewBox="0 0 1 1"><path d="M-3 -1.5L0 1.5L3 -1.5" fill="none" stroke="#cac8bc" stroke-width="1.6"/></svg>
<div class="ab" style="left:422.5px;top:364.5px;width:14px;height:13px;border-radius:2px;border:1px solid #e8e6dc;background:#f0efe6"></div>
<svg style="left:429.5px;top:371.0px" width="1" height="1" viewBox="0 0 1 1"><path d="M1.5 -3L-1.5 0L1.5 3" fill="none" stroke="#cac8bc" stroke-width="1.6"/></svg>
<div class="ab" style="left:680px;top:364.5px;width:14px;height:13px;border-radius:2px;border:1px solid #e8e6dc;background:#f0efe6"></div>
<svg style="left:687.0px;top:371.0px" width="1" height="1" viewBox="0 0 1 1"><path d="M-1.5 -3L1.5 0L-1.5 3" fill="none" stroke="#cac8bc" stroke-width="1.6"/></svg>
<div class="ab" style="left:421px;top:389.3px;width:10.5px;height:10.5px;background:#fff;border:2px solid #8a887e;border-right:1px solid #f4f3ee;border-bottom:1px solid #f4f3ee"></div>
<svg style="left:423.3px;top:391.5px;" width="8" height="7" viewBox="0 0 8 7"><path d="M0.7 3.2L2.8 5.6L6.8 1.2" fill="none" stroke="#000" stroke-width="1.9"/></svg>
<div class="t" style="left:437.3px;transform-origin:0 0;top:391px;font-size:10.4px;transform:scaleX(0.9084);">Don't change the comment on disk update</div>
<div class="ab" style="left:457px;top:409.5px;width:66px;height:20px;background:#ebebdc;border:1px solid #3a3a36;box-shadow:inset 1px 1px 0 #fafaf4,inset -1px -1px 0 #8a887c"></div>
<div class="t" style="left:482.49px;width:15.03px;transform-origin:50% 0;top:414px;font-size:10.4px;transform:scaleX(0.9000);color:#000">OK</div>
<div class="ab" style="left:535px;top:409.5px;width:65.5px;height:20px;background:#ebebdc;border:1px solid #fafaf4;border-right-color:#5a5a52;border-bottom-color:#5a5a52;box-shadow:inset -1px -1px 0 #b4b2a4"></div>
<div class="t" style="left:551.56px;width:32.37px;transform-origin:50% 0;top:414px;font-size:10.4px;transform:scaleX(0.9000);color:#000">Cancel</div>
<div class="ab" style="left:613px;top:409.5px;width:67px;height:20px;background:#ebebdc;border:1px solid #fafaf4;border-right-color:#5a5a52;border-bottom-color:#5a5a52;box-shadow:inset -1px -1px 0 #b4b2a4"></div>
<div class="t" style="left:624.83px;width:43.35px;transform-origin:50% 0;top:414px;font-size:10.4px;transform:scaleX(0.9000);color:#aca899;text-shadow:1px 1px 0 #fff">Archive...</div>
<div class="ab" style="left:626.5px;top:423.5px;width:6px;height:1px;background:#b0ae9e"></div></body></html>
